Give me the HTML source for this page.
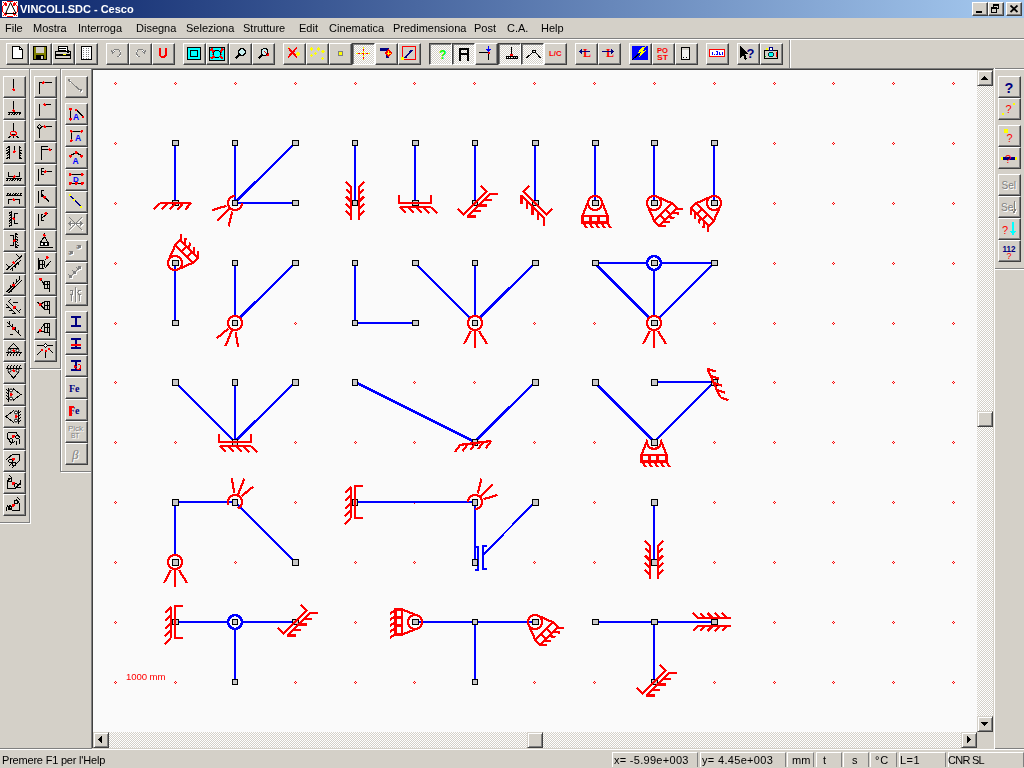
<!DOCTYPE html><html><head><meta charset="utf-8"><title>VINCOLI.SDC - Cesco</title><style>
*{margin:0;padding:0;box-sizing:border-box}
html,body{width:1024px;height:768px;overflow:hidden;background:#D4D0C8;font-family:"Liberation Sans",sans-serif;font-size:11px;color:#000}
body{position:relative}
.a{position:absolute}
.b{position:absolute;width:23px;height:22px;background:#D4D0C8;border-style:solid;border-width:1px;border-color:#fff #404040 #404040 #fff;box-shadow:inset -1px -1px #808080}
.p{border-color:#404040 #fff #fff #404040;box-shadow:inset 1px 1px #808080;background:repeating-conic-gradient(#fff 0 25%,#D4D0C8 0 50%) 0 0/2px 2px}
.b svg{position:absolute;left:2px;top:2px;width:16px;height:16px;overflow:visible}
.p svg{left:3px;top:3px}
.chk{background:repeating-conic-gradient(#fff 0 25%,#D4D0C8 0 50%) 0 0/2px 2px}
.sb{position:absolute;width:16px;height:16px;background:#D4D0C8;border-style:solid;border-width:1px;border-color:#D4D0C8 #404040 #404040 #D4D0C8;box-shadow:inset 1px 1px #fff,inset -1px -1px #808080}
.tb{position:absolute;top:2px;width:16px;height:14px;background:#D4D0C8;border-style:solid;border-width:1px;border-color:#fff #404040 #404040 #fff;box-shadow:inset -1px -1px #808080}
.m{position:absolute;top:22px;font-size:11px;line-height:13px;white-space:nowrap;will-change:transform}
.t{will-change:transform}
.st{position:absolute;top:752px;height:16px;border-style:solid;border-width:1px;border-color:#808080 #fff #fff #808080;font-size:11px;line-height:13px;white-space:nowrap;padding-left:1px}
svg{display:block}
</style></head><body><div class="a" style="left:0;top:0;width:1024px;height:18px;background:linear-gradient(to right,#0A246A,#A6CAF0)"></div><svg class="a" style="left:2px;top:1px" width="16" height="16" viewBox="0 0 16 16" shape-rendering="crispEdges"><rect x="0" y="0" width="16" height="16" fill="#fff"/><path d="M5 0h6v1h-6zM5 15h6v1h-6zM0 5h1v6h-1zM15 5h1v6h-1z" fill="#f00"/><path d="M1 1h1v1h-1zM3 1h1v1h-1zM2 2h3v2h-1v1h-1v-1h-1zM1 4h1v1h-1zM4 4h1v1h-1zM12 1h1v1h-1zM14 1h1v1h-1zM11 2h3v2h-1v1h-1v-1h-1zM11 4h1v1h-1zM14 4h1v1h-1zM1 11h1v1h-1zM4 11h1v1h-1zM2 12h3v2h-1v1h-1v-1h-1zM1 14h1v1h-1zM3 14h1v1h-1zM11 11h1v1h-1zM14 11h1v1h-1zM11 12h3v2h-1v1h-1v-1h-1zM12 14h1v1h-1zM14 14h1v1h-1z" fill="#f00"/><path d="M8.5 1.5L14 12.5H3.5Z" fill="none" stroke="#000" stroke-width="1" shape-rendering="auto"/></svg><div class="a t" style="left:20px;top:2px;color:#fff;font-weight:bold;font-size:11px;line-height:14px;white-space:nowrap">VINCOLI.SDC - Cesco</div><div class="tb" style="left:972px"><div class="a" style="left:3px;top:8px;width:6px;height:2px;background:#000"></div></div><div class="tb" style="left:988px"><div class="a" style="left:4px;top:1px;width:6px;height:5px;border:1px solid #000;border-top-width:2px"></div><div class="a" style="left:2px;top:4px;width:6px;height:6px;border:1px solid #000;border-top-width:2px;background:#D4D0C8"></div></div><svg class="a" style="left:1006px;top:2px" width="16" height="14"></svg><div class="tb" style="left:1006px"><svg class="a" style="left:3px;top:2px" width="9" height="8" viewBox="0 0 9 8"><path d="M0.5 0.5 L7.5 7 M7.5 0.5 L0.5 7" stroke="#000" stroke-width="1.8"/></svg></div><div class="m" style="left:5px">File</div><div class="m" style="left:32.5px">Mostra</div><div class="m" style="left:78px">Interroga</div><div class="m" style="left:136px">Disegna</div><div class="m" style="left:186px">Seleziona</div><div class="m" style="left:243px">Strutture</div><div class="m" style="left:299px">Edit</div><div class="m" style="left:329px">Cinematica</div><div class="m" style="left:393px">Predimensiona</div><div class="m" style="left:474px">Post</div><div class="m" style="left:507px">C.A.</div><div class="m" style="left:541px">Help</div><div class="a" style="left:0;top:38px;width:1024px;height:1px;background:#808080"></div><div class="a" style="left:0;top:39px;width:1024px;height:1px;background:#fff"></div><div class="b" style="left:6px;top:43px"><svg viewBox="0 0 16 16" shape-rendering="crispEdges"><path d="M3.5 0.5H10.5L13.5 3.5V12.5H3.5Z" stroke="#000" stroke-width="1" fill="#fff" /><path d="M10.5 0.5V3.5H13.5" stroke="#000" stroke-width="1" fill="none" /></svg></div><div class="b" style="left:29px;top:43px"><svg viewBox="0 0 16 16" shape-rendering="crispEdges"><rect x="1" y="0" width="14" height="14" fill="#000"/><rect x="2" y="1" width="12" height="12" fill="#808000"/><rect x="4" y="1" width="8" height="6" fill="#D4D0C8"/><rect x="4" y="9" width="8" height="5" fill="#000"/><rect x="9" y="10" width="2" height="3" fill="#D4D0C8"/></svg></div><div class="b" style="left:52px;top:43px"><svg viewBox="0 0 16 16" shape-rendering="crispEdges"><path d="M3.5 0.5H12.5V5.5H3.5Z" stroke="#000" stroke-width="1" fill="#fff" /><path d="M4 2.5H11M4 4H11" stroke="#000" stroke-width="1" fill="none" /><path d="M0.5 5.5H15.5V12.5H0.5Z" stroke="#000" stroke-width="1" fill="#D4D0C8" /><rect x="1" y="8" width="14" height="2" fill="#000"/><rect x="8" y="8" width="3" height="1" fill="#ff0"/><path d="M13 6.5A1 1 0 1 1 13.01 6.5" stroke="#000" stroke-width="1" fill="none" /></svg></div><div class="b" style="left:75px;top:43px"><svg viewBox="0 0 16 16" shape-rendering="crispEdges"><rect x="3" y="0" width="11" height="14" fill="#000"/><rect x="4" y="1" width="9" height="12" fill="#fff"/><rect x="5.0" y="1.5" width="1.2" height="1.2" fill="#808080"/><rect x="7.5" y="1.5" width="1.2" height="1.2" fill="#808080"/><rect x="10.0" y="1.5" width="1.2" height="1.2" fill="#808080"/><rect x="5.0" y="3.5" width="1.2" height="1.2" fill="#808080"/><rect x="7.5" y="3.5" width="1.2" height="1.2" fill="#808080"/><rect x="10.0" y="3.5" width="1.2" height="1.2" fill="#808080"/><rect x="5.0" y="5.5" width="1.2" height="1.2" fill="#808080"/><rect x="7.5" y="5.5" width="1.2" height="1.2" fill="#808080"/><rect x="10.0" y="5.5" width="1.2" height="1.2" fill="#808080"/><rect x="5.0" y="7.5" width="1.2" height="1.2" fill="#808080"/><rect x="7.5" y="7.5" width="1.2" height="1.2" fill="#808080"/><rect x="10.0" y="7.5" width="1.2" height="1.2" fill="#808080"/><rect x="5.0" y="9.5" width="1.2" height="1.2" fill="#808080"/><rect x="7.5" y="9.5" width="1.2" height="1.2" fill="#808080"/><rect x="10.0" y="9.5" width="1.2" height="1.2" fill="#808080"/><rect x="5.0" y="11.5" width="1.2" height="1.2" fill="#808080"/><rect x="7.5" y="11.5" width="1.2" height="1.2" fill="#808080"/><rect x="10.0" y="11.5" width="1.2" height="1.2" fill="#808080"/></svg></div><div class="b" style="left:106px;top:43px"><svg viewBox="0 0 16 16" shape-rendering="crispEdges"><path d="M4 6A4 4 0 1 1 9 11" stroke="#fff" stroke-width="1" fill="none" /><path d="M3.5 6A4 4 0 1 1 8.5 11" stroke="#808080" stroke-width="1" fill="none" /><path d="M2 4L3.5 7L6 5.5" stroke="#808080" stroke-width="1" fill="none" /></svg></div><div class="b" style="left:129px;top:43px"><svg viewBox="0 0 16 16" shape-rendering="crispEdges"><path d="M12 6A4 4 0 1 0 7 11" stroke="#fff" stroke-width="1" fill="none" /><path d="M12.5 6A4 4 0 1 0 7.5 11" stroke="#808080" stroke-width="1" fill="none" /><path d="M14 4L12.5 7L10 5.5" stroke="#808080" stroke-width="1" fill="none" /></svg></div><div class="b" style="left:152px;top:43px"><svg viewBox="0 0 16 16" shape-rendering="crispEdges"><path d="M5 1.5V8A3 3 0 0 0 11 8V1.5" stroke="#f00" stroke-width="2" fill="none" /></svg></div><div class="b" style="left:183px;top:43px"><svg viewBox="0 0 16 16" shape-rendering="crispEdges"><rect x="1" y="1" width="14" height="13" fill="#000"/><rect x="2" y="2" width="12" height="11" fill="#0ff"/><rect x="3.5" y="4" width="8.5" height="7" fill="#000"/><rect x="4.5" y="5" width="6.5" height="5" fill="#0ff"/></svg></div><div class="b" style="left:206px;top:43px"><svg viewBox="0 0 16 16" shape-rendering="crispEdges"><rect x="0" y="1" width="16" height="14" fill="#000"/><rect x="1" y="2" width="14" height="12" fill="#0ff"/><path d="M1 4.5H15M1 11.5H15M3.5 2V14M12.5 2V14" stroke="#f00" stroke-width="1" fill="none" stroke-dasharray="1 1"/><circle cx="8" cy="8" r="3.6" fill="#0ff" stroke="#000" stroke-width="1"/><path d="M2 3L5 6M14 3L11 6M2 13L5 10M14 13L11 10" stroke="#f00" stroke-width="1.5" fill="none" /></svg></div><div class="b" style="left:229px;top:43px"><svg viewBox="0 0 16 16" shape-rendering="crispEdges"><path d="M3.5 12.5L7.5 8.5" stroke="#000" stroke-width="2.2" fill="none" /><circle cx="10" cy="6" r="3.4" fill="#c8f0f0" stroke="#000" stroke-width="1.3"/></svg></div><div class="b" style="left:252px;top:43px"><svg viewBox="0 0 16 16" shape-rendering="crispEdges"><path d="M3.5 12.5L7.5 8.5" stroke="#000" stroke-width="2.2" fill="none" /><circle cx="9.5" cy="6" r="3.4" fill="#c8f0f0" stroke="#000" stroke-width="1.3"/><path d="M9 5L13 9" stroke="#f00" stroke-width="1.4" fill="none" /><polygon points="14,10 10.5,9.5 13.5,6.5" fill="#f00"/></svg></div><div class="b" style="left:283px;top:43px"><svg viewBox="0 0 16 16" shape-rendering="crispEdges"><path d="M2 1.5L11 11.5M11 1.5L2 11.5" stroke="#f00" stroke-width="1.8" fill="none" /><rect x="11" y="7" width="2" height="2" fill="#ff0"/><rect x="12" y="8" width="0" height="0" fill="#ff0"/><path d="M12 6.5L13.5 8L12 9.5L10.5 8Z" stroke="#ff0" stroke-width="1" fill="#ff0" /><rect x="2" y="1" width="1" height="1" fill="#ff0"/></svg></div><div class="b" style="left:306px;top:43px"><svg viewBox="0 0 16 16" shape-rendering="crispEdges"><path d="M2.5 1.8L3.7 3L2.5 4.2L1.3 3Z" stroke="#ff0" stroke-width="1" fill="#ff0" /><path d="M9.5 1.8L10.7 3L9.5 4.2L8.3 3Z" stroke="#ff0" stroke-width="1" fill="#ff0" /><path d="M14 4.3L15.2 5.5L14 6.7L12.8 5.5Z" stroke="#ff0" stroke-width="1" fill="#ff0" /><path d="M6.5 6.3L7.7 7.5L6.5 8.7L5.3 7.5Z" stroke="#ff0" stroke-width="1" fill="#ff0" /><path d="M2.5 8.3L3.7 9.5L2.5 10.7L1.3 9.5Z" stroke="#ff0" stroke-width="1" fill="#ff0" /><path d="M13.5 11.3L14.7 12.5L13.5 13.7L12.3 12.5Z" stroke="#ff0" stroke-width="1" fill="#ff0" /></svg></div><div class="b" style="left:329px;top:43px"><svg viewBox="0 0 16 16" shape-rendering="crispEdges"><rect x="6" y="5" width="5" height="5" fill="#808080"/><rect x="7" y="6" width="3" height="3" fill="#ff0"/></svg></div><div class="b p" style="left:352px;top:43px"><svg viewBox="0 0 16 16" shape-rendering="crispEdges"><path d="M0 6.5H14" stroke="#f00" stroke-width="1" fill="none" /><path d="M0 6.5H14" stroke="#ff0" stroke-width="1" fill="none" stroke-dasharray="1.5 2.5"/><path d="M7 0V13" stroke="#f00" stroke-width="1" fill="none" /><path d="M7 0V13" stroke="#ff0" stroke-width="1" fill="none" stroke-dasharray="1.5 2.5"/></svg></div><div class="b" style="left:375px;top:43px"><svg viewBox="0 0 16 16" shape-rendering="crispEdges"><rect x="1.5" y="1.5" width="9" height="3" fill="#000080"/><rect x="7.5" y="1.5" width="3" height="10" fill="#000080"/><path d="M10.5 4L13.5 7L10.5 10L7.5 7Z" stroke="#f00" stroke-width="1.5" fill="#f00" /><path d="M10.5 5V9M8.5 7H12.5" stroke="#ff0" stroke-width="1" fill="none" /></svg></div><div class="b" style="left:398px;top:43px"><svg viewBox="0 0 16 16" shape-rendering="crispEdges"><path d="M1.5 0.5H14.5V13.5H1.5Z" stroke="#f00" stroke-width="1" fill="none" /><path d="M4 12L11 4" stroke="#000080" stroke-width="1.8" fill="none" /><rect x="0" y="11" width="3" height="3" fill="#ff0"/></svg></div><div class="b p" style="left:429px;top:43px"><svg viewBox="0 0 16 16" shape-rendering="crispEdges"><text x="6" y="12" font-family="Liberation Sans" font-weight="bold" font-size="12" fill="#0f0">?</text></svg></div><div class="b p" style="left:452px;top:43px"><svg viewBox="0 0 16 16" shape-rendering="crispEdges"><path d="M3.5 14V1.5H12.5V14M3.5 6.5H11" stroke="#000" stroke-width="1" fill="none" /><path d="M4.5 14V2.5H11.5V14M4.5 7.5H11" stroke="#000" stroke-width="1" fill="none" /></svg></div><div class="b" style="left:475px;top:43px"><svg viewBox="0 0 16 16" shape-rendering="crispEdges"><path d="M1 6.5H10M10.5 6.5V14" stroke="#000" stroke-width="1" fill="none" /><path d="M10.5 0V5M8.5 3L10.5 5.5L12.5 3" stroke="#00f" stroke-width="1" fill="none" /><rect x="9.5" y="5.5" width="2" height="2" fill="#f00"/></svg></div><div class="b p" style="left:498px;top:43px"><svg viewBox="0 0 16 16" shape-rendering="crispEdges"><path d="M9.5 0V7" stroke="#000" stroke-width="1" fill="none" /><rect x="8" y="6.5" width="3" height="2.5" fill="#f00"/><path d="M4.5 9.5H15.5V11.5H4.5Z" stroke="#000" stroke-width="1" fill="none" /><path d="M5.5 11.5L7 9.5M8 11.5L9.5 9.5M10.5 11.5L12 9.5M13 11.5L14.5 9.5" stroke="#000" stroke-width="1" fill="none" /></svg></div><div class="b p" style="left:521px;top:43px"><svg viewBox="0 0 16 16" shape-rendering="crispEdges"><path d="M1.5 11L8 5M10 5L15.5 11" stroke="#000" stroke-width="1" fill="none" /><circle cx="9" cy="4.3" r="1.4" fill="none" stroke="#000" stroke-width="1"/></svg></div><div class="b" style="left:544px;top:43px"><svg viewBox="0 0 16 16" shape-rendering="crispEdges"><text x="2" y="10" font-family="Liberation Sans" font-weight="bold" font-size="7.5" fill="#f00" textLength="12.5" lengthAdjust="spacingAndGlyphs">L/C</text></svg></div><div class="b" style="left:575px;top:43px"><svg viewBox="0 0 16 16" shape-rendering="crispEdges"><text x="5" y="11" font-family="Liberation Serif" font-weight="bold" font-size="12" fill="#f00">L</text><path d="M2 5.5H12" stroke="#000080" stroke-width="1" fill="none" /><path d="M4 3.5L1.5 5.5L4 7.5" stroke="#000080" stroke-width="1" fill="none" /></svg></div><div class="b" style="left:598px;top:43px"><svg viewBox="0 0 16 16" shape-rendering="crispEdges"><text x="5" y="11" font-family="Liberation Serif" font-weight="bold" font-size="12" fill="#f00">L</text><path d="M1 5.5H12" stroke="#000080" stroke-width="1" fill="none" /><path d="M10 3.5L12.5 5.5L10 7.5" stroke="#000080" stroke-width="1" fill="none" /></svg></div><div class="b" style="left:629px;top:43px"><svg viewBox="0 0 16 16" shape-rendering="crispEdges"><rect x="0" y="0" width="16" height="14" fill="#00f"/><path d="M0 14L8 7" stroke="#000" stroke-width="1" fill="none" /><polygon points="9,2 14,0 11,5 14,4 7,11 9,6 6,7" fill="#ff0"/></svg></div><div class="b" style="left:652px;top:43px"><svg viewBox="0 0 16 16" shape-rendering="crispEdges"><text x="2" y="6.5" font-family="Liberation Sans" font-weight="bold" font-size="7" fill="#f00" textLength="11" lengthAdjust="spacingAndGlyphs">PO</text><text x="2" y="13.5" font-family="Liberation Sans" font-weight="bold" font-size="7" fill="#f00" textLength="11" lengthAdjust="spacingAndGlyphs">ST</text></svg></div><div class="b" style="left:675px;top:43px"><svg viewBox="0 0 16 16" shape-rendering="crispEdges"><rect x="3" y="1" width="9" height="13" fill="#000"/><rect x="4" y="2" width="7" height="11" fill="#f0f0f0"/><rect x="4" y="2" width="7" height="2" fill="#D4D0C8"/><rect x="5" y="11" width="1" height="1" fill="#000"/><rect x="8" y="11" width="1" height="1" fill="#000"/></svg></div><div class="b" style="left:706px;top:43px"><svg viewBox="0 0 16 16" shape-rendering="crispEdges"><rect x="0" y="3" width="16" height="8" fill="#f00"/><rect x="1" y="4" width="14" height="6" fill="#fff"/><path d="M3 5.5V8.5M5 7.5V8.5M6.5 5.5H8.5V8.5H6.5M10 5.5V8.5H12M13 6V8.5" stroke="#00f" stroke-width="1" fill="none" /></svg></div><div class="b" style="left:737px;top:43px"><svg viewBox="0 0 16 16" shape-rendering="crispEdges"><polygon points="0,0 0,12 3,9 5,14 7,13 5,8 9,8" fill="#000"/><text x="6.5" y="11.5" font-family="Liberation Sans" font-weight="bold" font-size="13" fill="#000080">?</text></svg></div><div class="b" style="left:760px;top:43px"><svg viewBox="0 0 16 16" shape-rendering="crispEdges"><rect x="1" y="4" width="14" height="9" fill="#000"/><rect x="2" y="5" width="12" height="7" fill="#D4D0C8"/><rect x="3" y="2" width="2" height="2" fill="#ff0"/><circle cx="8" cy="3" r="1.6" fill="#fff" stroke="#000080"/><circle cx="8" cy="8.5" r="2.5" fill="#0ff" stroke="#000" stroke-width=".8"/><rect x="13" y="6" width="1" height="5" fill="#f00"/><rect x="2" y="10" width="1" height="1" fill="#0c0"/></svg></div><div class="a" style="left:789px;top:40px;width:1px;height:28px;background:#808080"></div><div class="a" style="left:790px;top:40px;width:1px;height:28px;background:#fff"></div><div class="a" style="left:0;top:68px;width:1024px;height:1px;background:#808080"></div><div class="a" style="left:0;top:69px;width:92px;height:1px;background:#fff"></div><div class="a" style="left:29px;top:68px;width:1px;height:455px;background:#808080"></div><div class="a" style="left:30px;top:69px;width:1px;height:454px;background:#fff"></div><div class="a" style="left:60px;top:68px;width:1px;height:404px;background:#808080"></div><div class="a" style="left:61px;top:69px;width:1px;height:404px;background:#fff"></div><div class="a" style="left:0px;top:522px;width:30px;height:1px;background:#808080"></div><div class="a" style="left:0px;top:523px;width:31px;height:1px;background:#fff"></div><div class="a" style="left:29px;top:368px;width:32px;height:1px;background:#808080"></div><div class="a" style="left:30px;top:369px;width:31px;height:1px;background:#fff"></div><div class="a" style="left:60px;top:471px;width:31px;height:1px;background:#808080"></div><div class="a" style="left:61px;top:472px;width:30px;height:1px;background:#fff"></div><div class="a" style="left:0px;top:748px;width:92px;height:1px;background:#808080"></div><div class="b" style="left:3px;top:76px"><svg viewBox="0 0 16 16" shape-rendering="crispEdges"><path d="M7.5 0V10" stroke="#000" stroke-width="1" fill="none" /><path d="M6.0 10.5H9.0M7.5 9.0V12.0" stroke="#f00" stroke-width="1.2"/><rect x="6.5" y="9.5" width="2" height="2" fill="#f00"/></svg></div><div class="b" style="left:3px;top:98px"><svg viewBox="0 0 16 16" shape-rendering="crispEdges"><path d="M7.5 0V9" stroke="#000" stroke-width="1" fill="none" /><path d="M2 11.5H14M4.5 11.5L2.5 14.0M7.1 11.5L5.1 14.0M9.7 11.5L7.699999999999999 14.0M12.299999999999999 11.5L10.299999999999999 14.0M14.899999999999999 11.5L12.899999999999999 14.0" stroke="#000" stroke-width="1" fill="none" /><path d="M6.0 9.5H9.0M7.5 8.0V11.0" stroke="#f00" stroke-width="1.2"/><rect x="6.5" y="8.5" width="2" height="2" fill="#f00"/></svg></div><div class="b" style="left:3px;top:120px"><svg viewBox="0 0 16 16" shape-rendering="crispEdges"><path d="M7.5 0V8M7.5 11L2 15M7.5 11L13 15M7.5 12V15" stroke="#000" stroke-width="1" fill="none" /><ellipse cx="7.5" cy="10.5" rx="3.2" ry="2" fill="none" stroke="#f00" stroke-width="1.2"/></svg></div><div class="b" style="left:3px;top:142px"><svg viewBox="0 0 16 16" shape-rendering="crispEdges"><path d="M3 1V14M3 1.5L0.5 3.5M3 4.1L0.5 6.1M3 6.699999999999999L0.5 8.7M3 9.299999999999999L0.5 11.299999999999999M3 11.899999999999999L0.5 13.899999999999999" stroke="#000" stroke-width="1" fill="none" /><path d="M13 1V14M13 1.5L15.5 3.5M13 4.1L15.5 6.1M13 6.699999999999999L15.5 8.7M13 9.299999999999999L15.5 11.299999999999999M13 11.899999999999999L15.5 13.899999999999999" stroke="#000" stroke-width="1" fill="none" /><path d="M8 1V6" stroke="#000" stroke-width="1" fill="none" /><path d="M6.9 6.5H9.9M8.4 5.0V8.0" stroke="#f00" stroke-width="1.2"/><rect x="7.4" y="5.5" width="2" height="2" fill="#f00"/></svg></div><div class="b" style="left:3px;top:164px"><svg viewBox="0 0 16 16" shape-rendering="crispEdges"><path d="M2.5 5V9.5H13.5V5" stroke="#000" stroke-width="1" fill="none" /><path d="M0 11.5H15.5M2.5 11.5L0.5 14.0M5.1 11.5L3.1 14.0M7.7 11.5L5.7 14.0M10.3 11.5L8.3 14.0M12.9 11.5L10.9 14.0M15.5 11.5L13.5 14.0" stroke="#000" stroke-width="1" fill="none" /><path d="M6.800000000000001 9.5H9.8M8.3 8.0V11.0" stroke="#f00" stroke-width="1.2"/><rect x="7.300000000000001" y="8.5" width="2" height="2" fill="#f00"/></svg></div><div class="b" style="left:3px;top:186px"><svg viewBox="0 0 16 16" shape-rendering="crispEdges"><path d="M0 6.5H15.5M2.5 4.0L0.5 6.5M5.1 4.0L3.1 6.5M7.7 4.0L5.7 6.5M10.3 4.0L8.3 6.5M12.9 4.0L10.9 6.5M15.5 4.0L13.5 6.5" stroke="#000" stroke-width="1" fill="none" /><path d="M2.5 14.5V10.5H13.5V14.5" stroke="#000" stroke-width="1" fill="none" /><path d="M6.1 10.5H9.1M7.6 9.0V12.0" stroke="#f00" stroke-width="1.2"/><rect x="6.6" y="9.5" width="2" height="2" fill="#f00"/></svg></div><div class="b" style="left:3px;top:208px"><svg viewBox="0 0 16 16" shape-rendering="crispEdges"><path d="M5.5 0V15M5.5 0.5L3.0 2.5M5.5 3.1L3.0 5.1M5.5 5.7L3.0 7.7M5.5 8.3L3.0 10.3M5.5 10.9L3.0 12.9M5.5 13.5L3.0 15.5" stroke="#000" stroke-width="1" fill="none" /><path d="M11.5 2H8.5V12.5H11.5" stroke="#000" stroke-width="1" fill="none" /><path d="M6.0 7.8H9.0M7.5 6.3V9.3" stroke="#f00" stroke-width="1.2"/><rect x="6.5" y="6.8" width="2" height="2" fill="#f00"/></svg></div><div class="b" style="left:3px;top:230px"><svg viewBox="0 0 16 16" shape-rendering="crispEdges"><path d="M4.3 2.2H7V12.8H4.3" stroke="#000" stroke-width="1" fill="none" /><path d="M9.8 0V15M9.8 0.5L12.3 2.5M9.8 3.1L12.3 5.1M9.8 5.7L12.3 7.7M9.8 8.3L12.3 10.3M9.8 10.9L12.3 12.9M9.8 13.5L12.3 15.5" stroke="#000" stroke-width="1" fill="none" /><path d="M6.800000000000001 7.5H9.8M8.3 6.0V9.0" stroke="#f00" stroke-width="1.2"/><rect x="7.300000000000001" y="6.5" width="2" height="2" fill="#f00"/></svg></div><div class="b" style="left:3px;top:252px"><svg viewBox="0 0 16 16" shape-rendering="crispEdges"><path d="M0.5 15L16 0.5M3 12L0 9M13 2L10 -1M4 15L15.5 4.5M6 13L6 16M9 10L9 13M12 7L12 10" stroke="#000" stroke-width="1" fill="none" /><path d="M6.0 7.5H9.0M7.5 6.0V9.0" stroke="#f00" stroke-width="1.2"/><rect x="6.5" y="6.5" width="2" height="2" fill="#f00"/></svg></div><div class="b" style="left:3px;top:274px"><svg viewBox="0 0 16 16" shape-rendering="crispEdges"><path d="M0.5 15L14 2M2.5 16L16 3M4 11L4 8M7 8L7 5M10 5L10 2M13 2L13 -1M6 14L3 14" stroke="#000" stroke-width="1" fill="none" /><path d="M6.0 8H9.0M7.5 6.5V9.5" stroke="#f00" stroke-width="1.2"/><rect x="6.5" y="7" width="2" height="2" fill="#f00"/></svg></div><div class="b" style="left:3px;top:296px"><svg viewBox="0 0 16 16" shape-rendering="crispEdges"><path d="M2 2L14 14M5 0L2 3M12 13L15 10M0 5L10 15M0 8L3 8M3 11L6 11M6 14L9 14M7 3L12 3" stroke="#000" stroke-width="1" fill="none" /><path d="M6.5 8H9.5M8 6.5V9.5" stroke="#f00" stroke-width="1.2"/><rect x="7" y="7" width="2" height="2" fill="#f00"/></svg></div><div class="b" style="left:3px;top:318px"><svg viewBox="0 0 16 16" shape-rendering="crispEdges"><path d="M1 1L15.5 15.5M3.5 0L3.5 3M6.5 3L6.5 6M9.5 6L9.5 9M12.5 9L12.5 12M1 5L4 5M7 13L4 13" stroke="#000" stroke-width="1" fill="none" /><path d="M5.5 7H8.5M7 5.5V8.5" stroke="#f00" stroke-width="1.2"/><rect x="6" y="6" width="2" height="2" fill="#f00"/></svg></div><div class="b" style="left:3px;top:340px"><svg viewBox="0 0 16 16" shape-rendering="crispEdges"><path d="M7.5 0.5L2.5 5.5H12.5ZM0 9.5H15.5M1 12.5L3 10M4 12.5L6 10M7 12.5L9 10M10 12.5L12 10M13 12.5L15 10" stroke="#000" stroke-width="1" fill="none" /><circle cx="3.5" cy="7.5" r="1.5" fill="#fff" stroke="#000" stroke-width="1" shape-rendering="auto"/><circle cx="11.5" cy="7.5" r="1.5" fill="#fff" stroke="#000" stroke-width="1" shape-rendering="auto"/><path d="M6.0 7.5H9.0M7.5 6.0V9.0" stroke="#f00" stroke-width="1.2"/><rect x="6.5" y="6.5" width="2" height="2" fill="#f00"/></svg></div><div class="b" style="left:3px;top:362px"><svg viewBox="0 0 16 16" shape-rendering="crispEdges"><path d="M1 2.5L3 0M4 2.5L6 0M7 2.5L9 0M10 2.5L12 0M13 2.5L15 0M0 3.5H15.5M2.5 7.5L7.5 13L12.5 7.5" stroke="#000" stroke-width="1" fill="none" /><circle cx="3.5" cy="5.5" r="1.5" fill="#fff" stroke="#000" stroke-width="1" shape-rendering="auto"/><circle cx="11.5" cy="5.5" r="1.5" fill="#fff" stroke="#000" stroke-width="1" shape-rendering="auto"/><path d="M6.0 5.5H9.0M7.5 4.0V7.0" stroke="#f00" stroke-width="1.2"/><rect x="6.5" y="4.5" width="2" height="2" fill="#f00"/></svg></div><div class="b" style="left:3px;top:384px"><svg viewBox="0 0 16 16" shape-rendering="crispEdges"><path d="M2.5 0.5V15M0 2L2 4M0 5L2 7M0 8L2 10M0 11L2 13M7 1.5L15 7.5L7 13.5" stroke="#000" stroke-width="1" fill="none" /><circle cx="5" cy="3.5" r="1.5" fill="#fff" stroke="#000" stroke-width="1" shape-rendering="auto"/><circle cx="5" cy="11.5" r="1.5" fill="#fff" stroke="#000" stroke-width="1" shape-rendering="auto"/><path d="M3.5 7.5H6.5M5 6.0V9.0" stroke="#f00" stroke-width="1.2"/><rect x="4" y="6.5" width="2" height="2" fill="#f00"/></svg></div><div class="b" style="left:3px;top:406px"><svg viewBox="0 0 16 16" shape-rendering="crispEdges"><path d="M12.5 0.5V15M15 2L13 4M15 5L13 7M15 8L13 10M15 11L13 13M8 1.5L0 7.5L8 13.5" stroke="#000" stroke-width="1" fill="none" /><circle cx="10" cy="3.5" r="1.5" fill="#fff" stroke="#000" stroke-width="1" shape-rendering="auto"/><circle cx="10" cy="11.5" r="1.5" fill="#fff" stroke="#000" stroke-width="1" shape-rendering="auto"/><path d="M8.5 7.5H11.5M10 6.0V9.0" stroke="#f00" stroke-width="1.2"/><rect x="9" y="6.5" width="2" height="2" fill="#f00"/></svg></div><div class="b" style="left:3px;top:428px"><svg viewBox="0 0 16 16" shape-rendering="crispEdges"><path d="M1.5 1.5H10M1.5 1.5V7M1.5 7L5.5 12M10 1.5L13 6M4 14L7 11M7 12L9 10" stroke="#000" stroke-width="1" fill="none" /><circle cx="11.5" cy="6" r="1.8" fill="none" stroke="#000"/><circle cx="5" cy="9.5" r="1.8" fill="none" stroke="#000"/><path d="M13 8V13M10 10V14" stroke="#000" stroke-width="1" fill="none" /><path d="M5.5 5H8.5M7 3.5V6.5" stroke="#f00" stroke-width="1.2"/><rect x="6" y="4" width="2" height="2" fill="#f00"/></svg></div><div class="b" style="left:3px;top:450px"><svg viewBox="0 0 16 16" shape-rendering="crispEdges"><path d="M7 1H13V8M7 1L1 6M13 8L8 13M0 7L3 4M3 13L6 10M6 15L9 12" stroke="#000" stroke-width="1" fill="none" /><circle cx="4.5" cy="8" r="1.8" fill="none" stroke="#000"/><circle cx="8" cy="11" r="1.8" fill="none" stroke="#000"/><path d="M6.0 6H9.0M7.5 4.5V7.5" stroke="#f00" stroke-width="1.2"/><rect x="6.5" y="5" width="2" height="2" fill="#f00"/></svg></div><div class="b" style="left:3px;top:472px"><svg viewBox="0 0 16 16" shape-rendering="crispEdges"><path d="M1.5 6V13.5H9M1.5 6L4.5 3M9 13.5L14 8.5M3 0L6 3M14 5V10M11 9V13M15 12H11" stroke="#000" stroke-width="1" fill="none" /><circle cx="4" cy="5" r="1.8" fill="none" stroke="#000"/><circle cx="10" cy="10.5" r="1.8" fill="none" stroke="#000"/><path d="M5.5 8H8.5M7 6.5V9.5" stroke="#f00" stroke-width="1.2"/><rect x="6" y="7" width="2" height="2" fill="#f00"/></svg></div><div class="b" style="left:3px;top:494px"><svg viewBox="0 0 16 16" shape-rendering="crispEdges"><path d="M13 5.5V13H5.5M13 5.5L10 2.5M5.5 13L1 8.5M11 0L14 3M0 10V14M3 9H7M2 12H6" stroke="#000" stroke-width="1" fill="none" /><circle cx="10" cy="5" r="1.8" fill="none" stroke="#000"/><circle cx="4" cy="10.5" r="1.8" fill="none" stroke="#000"/><path d="M5.5 8H8.5M7 6.5V9.5" stroke="#f00" stroke-width="1.2"/><rect x="6" y="7" width="2" height="2" fill="#f00"/></svg></div><div class="b" style="left:34px;top:76px"><svg viewBox="0 0 16 16" shape-rendering="crispEdges"><path d="M2.5 15V3.5H14.5" stroke="#000" stroke-width="1" fill="none" /><path d="M4.9 3.6H7.9M6.4 2.1V5.1" stroke="#f00" stroke-width="1.2"/><rect x="5.4" y="2.6" width="2" height="2" fill="#f00"/></svg></div><div class="b" style="left:34px;top:98px"><svg viewBox="0 0 16 16" shape-rendering="crispEdges"><path d="M2.5 3V14.5M7.5 3.5H14" stroke="#000" stroke-width="1" fill="none" /><path d="M6.0 3.5H9.0M7.5 2.0V5.0" stroke="#f00" stroke-width="1.2"/><rect x="6.5" y="2.5" width="2" height="2" fill="#f00"/></svg></div><div class="b" style="left:34px;top:120px"><svg viewBox="0 0 16 16" shape-rendering="crispEdges"><path d="M2.5 5.7V15M4.3 3.7H14.5" stroke="#000" stroke-width="1" fill="none" /><circle cx="2.5" cy="3.7" r="1.8" fill="none" stroke="#000" stroke-width="1.1"/><path d="M6.0 3.7H9.0M7.5 2.2V5.2" stroke="#f00" stroke-width="1.2"/><rect x="6.5" y="2.7" width="2" height="2" fill="#f00"/></svg></div><div class="b" style="left:34px;top:142px"><svg viewBox="0 0 16 16" shape-rendering="crispEdges"><path d="M4 14.5V1.2H10.5M4 4.6H14.5" stroke="#000" stroke-width="1" fill="none" /><path d="M11.3 4.6H14.3M12.8 3.0999999999999996V6.1" stroke="#f00" stroke-width="1.2"/><rect x="11.8" y="3.5999999999999996" width="2" height="2" fill="#f00"/></svg></div><div class="b" style="left:34px;top:164px"><svg viewBox="0 0 16 16" shape-rendering="crispEdges"><path d="M1.7 2V14.3M4 1V7M4 1.2H7M4 7H7M4 4.5H14.5" stroke="#000" stroke-width="1" fill="none" /><path d="M6.6 4.5H9.6M8.1 3.0V6.0" stroke="#f00" stroke-width="1.2"/><rect x="7.1" y="3.5" width="2" height="2" fill="#f00"/></svg></div><div class="b" style="left:34px;top:186px"><svg viewBox="0 0 16 16" shape-rendering="crispEdges"><path d="M1.7 2V14.3M4 1V7M4 1.2H7M4 7H7M4 4.5L12 12.5" stroke="#000" stroke-width="1" fill="none" /><path d="M6.0 8H9.0M7.5 6.5V9.5" stroke="#f00" stroke-width="1.2"/><rect x="6.5" y="7" width="2" height="2" fill="#f00"/></svg></div><div class="b" style="left:34px;top:208px"><svg viewBox="0 0 16 16" shape-rendering="crispEdges"><path d="M1.7 2.5V14.5M4 3V9M4 3H6M4 9H7M4 8L11 2" stroke="#000" stroke-width="1" fill="none" /><path d="M7.4 2.5H10.4M8.9 1.0V4.0" stroke="#f00" stroke-width="1.2"/><rect x="7.9" y="1.5" width="2" height="2" fill="#f00"/></svg></div><div class="b" style="left:34px;top:230px"><svg viewBox="0 0 16 16" shape-rendering="crispEdges"><path d="M7.3 0V2M7.3 3.5L3.4 9.3M7.3 3.5L11 9.3M1 14.5H15.7" stroke="#000" stroke-width="1" fill="none" /><rect x="3" y="9" width="9" height="4" fill="#000"/><rect x="4" y="10" width="2" height="2" fill="#fff"/><rect x="8" y="10" width="2" height="2" fill="#fff"/><path d="M5.8 2.2H8.8M7.3 0.7000000000000002V3.7" stroke="#f00" stroke-width="1.2"/><rect x="6.3" y="1.2000000000000002" width="2" height="2" fill="#f00"/></svg></div><div class="b" style="left:34px;top:252px"><svg viewBox="0 0 16 16" shape-rendering="crispEdges"><path d="M1.5 3V14.5" stroke="#000" stroke-width="1" fill="none" /><path d="M2.5 5V13M5.5 5V13M7.5 6V12M2 5.5H7M2 9.5H8M2 13.5H7" stroke="#000" stroke-width="1" fill="none" /><path d="M8 5L10 2.5M8 13L13.5 6.5" stroke="#000" stroke-width="1" fill="none" /><path d="M8.5 2.5H11.5M10 1.0V4.0" stroke="#f00" stroke-width="1.2"/><rect x="9" y="1.5" width="2" height="2" fill="#f00"/></svg></div><div class="b" style="left:34px;top:274px"><svg viewBox="0 0 16 16" shape-rendering="crispEdges"><path d="M12.5 4V14.5M3.5 2L6.5 6M6.5 6L8 11" stroke="#000" stroke-width="1" fill="none" /><path d="M7.5 4V11M10.5 4V11M12.5 5V10M7 4.5H12M7 7.5H13M7 11.5H12" stroke="#000" stroke-width="1" fill="none" /><path d="M1.9 2H4.9M3.4 0.5V3.5" stroke="#f00" stroke-width="1.2"/><rect x="2.4" y="1" width="2" height="2" fill="#f00"/></svg></div><div class="b" style="left:34px;top:296px"><svg viewBox="0 0 16 16" shape-rendering="crispEdges"><path d="M12.5 2V14.5M0.5 3L3 5.7M3 5.7L7.5 2.5M3 5.7L7.5 10" stroke="#000" stroke-width="1" fill="none" /><path d="M7.5 2V10M10.5 2V10M12.5 3V9M7 2.5H12M7 6.5H13M7 10.5H12" stroke="#000" stroke-width="1" fill="none" /><path d="M1.5 5.7H4.5M3 4.2V7.2" stroke="#f00" stroke-width="1.2"/><rect x="2" y="4.7" width="2" height="2" fill="#f00"/></svg></div><div class="b" style="left:34px;top:318px"><svg viewBox="0 0 16 16" shape-rendering="crispEdges"><path d="M12.5 2V14.5M0.5 12L3 9.5M3 9.5L7.5 2.5M3 9.5L7.5 11" stroke="#000" stroke-width="1" fill="none" /><path d="M7.5 2V11M10.5 2V11M12.5 3V10M7 2.5H12M7 6.5H13M7 11.5H12" stroke="#000" stroke-width="1" fill="none" /><path d="M1.5 9.5H4.5M3 8.0V11.0" stroke="#f00" stroke-width="1.2"/><rect x="2" y="8.5" width="2" height="2" fill="#f00"/></svg></div><div class="b" style="left:34px;top:340px"><svg viewBox="0 0 16 16" shape-rendering="crispEdges"><path d="M0 2.5H16M6 6L0 12M12 6L16 10M8.5 9V15" stroke="#000" stroke-width="1" fill="none" /><circle cx="8.5" cy="2.5" r="1.8" fill="#fff" stroke="#000" stroke-width="1"/><rect x="3.7" y="5.7" width="2" height="2" fill="#f00"/><rect x="8.0" y="7.0" width="2" height="2" fill="#f00"/><rect x="11.0" y="4.5" width="2" height="2" fill="#f00"/></svg></div><div class="b" style="left:65px;top:76px"><svg viewBox="0 0 16 16" shape-rendering="crispEdges"><g transform="translate(1 1)" opacity="1"><path d="M0.6 1.1L13.2 12.3M0 0L2 2M1.5 0L0 2M12 10L14 12M14 10.5L12 12.5" stroke="#fff" stroke-width="1" fill="none" /></g><path d="M0.6 1.1L13.2 12.3M0 0L2 2M1.5 0L0 2M12 10L14 12M14 10.5L12 12.5" stroke="#808080" stroke-width="1" fill="none" /></svg></div><div class="b" style="left:65px;top:103px"><svg viewBox="0 0 16 16" shape-rendering="crispEdges"><path d="M2.4 3V13.5" stroke="#000" stroke-width="1" fill="none" /><path d="M0.8999999999999999 3H3.9M2.4 1.5V4.5" stroke="#f00" stroke-width="1.2"/><rect x="1.4" y="2" width="2" height="2" fill="#f00"/><path d="M0.8999999999999999 13H3.9M2.4 11.5V14.5" stroke="#f00" stroke-width="1.2"/><rect x="1.4" y="12" width="2" height="2" fill="#f00"/><path d="M7.9 3.6L15.1 10.6" stroke="#000" stroke-width="1" fill="none" /><rect x="6.9" y="2.6" width="2" height="2" fill="#f00"/><rect x="14.0" y="9.6" width="2" height="2" fill="#f00"/><text x="5" y="13.5" font-family="Liberation Sans" font-size="8.5" font-weight="bold" fill="#00f" >A</text></svg></div><div class="b" style="left:65px;top:125px"><svg viewBox="0 0 16 16" shape-rendering="crispEdges"><path d="M3.4 12.5V3.2H13.7" stroke="#000" stroke-width="1" fill="none" /><path d="M1.9 3.2H4.9M3.4 1.7000000000000002V4.7" stroke="#f00" stroke-width="1.2"/><rect x="2.4" y="2.2" width="2" height="2" fill="#f00"/><path d="M12.0 3.2H15.0M13.5 1.7000000000000002V4.7" stroke="#f00" stroke-width="1.2"/><rect x="12.5" y="2.2" width="2" height="2" fill="#f00"/><path d="M1.9 12.5H4.9M3.4 11.0V14.0" stroke="#f00" stroke-width="1.2"/><rect x="2.4" y="11.5" width="2" height="2" fill="#f00"/><text x="7" y="12.8" font-family="Liberation Sans" font-size="8.5" font-weight="bold" fill="#00f" >A</text></svg></div><div class="b" style="left:65px;top:147px"><svg viewBox="0 0 16 16" shape-rendering="crispEdges"><path d="M2.5 6A6 4 0 0 1 13.5 6" stroke="#000" stroke-width="1" fill="none" /><path d="M1.0 6H4.0M2.5 4.5V7.5" stroke="#f00" stroke-width="1.2"/><rect x="1.5" y="5" width="2" height="2" fill="#f00"/><path d="M6.5 2.5H9.5M8 1.0V4.0" stroke="#f00" stroke-width="1.2"/><rect x="7" y="1.5" width="2" height="2" fill="#f00"/><path d="M12.0 6H15.0M13.5 4.5V7.5" stroke="#f00" stroke-width="1.2"/><rect x="12.5" y="5" width="2" height="2" fill="#f00"/><text x="4.5" y="14" font-family="Liberation Sans" font-size="8.5" font-weight="bold" fill="#00f" >A</text></svg></div><div class="b" style="left:65px;top:169px"><svg viewBox="0 0 16 16" shape-rendering="crispEdges"><path d="M2 2.5H14M2 11H14" stroke="#000" stroke-width="1" fill="none" /><path d="M0.5 2.5H3.5M2 1.0V4.0" stroke="#f00" stroke-width="1.2"/><rect x="1" y="1.5" width="2" height="2" fill="#f00"/><path d="M12.5 2.5H15.5M14 1.0V4.0" stroke="#f00" stroke-width="1.2"/><rect x="13" y="1.5" width="2" height="2" fill="#f00"/><path d="M0.5 11H3.5M2 9.5V12.5" stroke="#f00" stroke-width="1.2"/><rect x="1" y="10" width="2" height="2" fill="#f00"/><path d="M6.5 11H9.5M8 9.5V12.5" stroke="#f00" stroke-width="1.2"/><rect x="7" y="10" width="2" height="2" fill="#f00"/><path d="M12.5 11H15.5M14 9.5V12.5" stroke="#f00" stroke-width="1.2"/><rect x="13" y="10" width="2" height="2" fill="#f00"/><text x="5" y="10" font-family="Liberation Sans" font-size="8" font-weight="bold" fill="#00f" >D</text></svg></div><div class="b" style="left:65px;top:191px"><svg viewBox="0 0 16 16" shape-rendering="crispEdges"><path d="M1.5 1L13.5 13" stroke="#000080" stroke-width="1" fill="none" /><rect x="0.5" y="0.0" width="2" height="2" fill="#ff0"/><rect x="4.5" y="4.5" width="2" height="2" fill="#ff0"/><rect x="12.0" y="11.5" width="2" height="2" fill="#ff0"/></svg></div><div class="b" style="left:65px;top:213px"><svg viewBox="0 0 16 16" shape-rendering="crispEdges"><g transform="translate(1 1)" opacity="1"><path d="M1 1L14 14M14 1L1 14M0 7.5H15M12 5.5L14.5 7.5L12 9.5M3 5.5L0.5 7.5L3 9.5" stroke="#fff" stroke-width="1" fill="none" /></g><path d="M1 1L14 14M14 1L1 14M0 7.5H15M12 5.5L14.5 7.5L12 9.5M3 5.5L0.5 7.5L3 9.5" stroke="#808080" stroke-width="1" fill="none" /></svg></div><div class="b" style="left:65px;top:240px"><svg viewBox="0 0 16 16" shape-rendering="crispEdges"><g transform="translate(1 1)" opacity="1"><text x="0" y="12" font-family="Liberation Sans" font-size="7" font-weight="bold" fill="#fff" >ə</text><text x="8" y="6" font-family="Liberation Sans" font-size="7" font-weight="bold" fill="#fff" >ə</text><rect x="2" y="8" width="3" height="3" fill="#fff"/><rect x="10" y="2" width="3" height="3" fill="#fff"/></g><text x="0" y="12" font-family="Liberation Sans" font-size="7" font-weight="bold" fill="#808080" >ə</text><text x="8" y="6" font-family="Liberation Sans" font-size="7" font-weight="bold" fill="#808080" >ə</text><rect x="2" y="8" width="3" height="3" fill="#808080"/><rect x="10" y="2" width="3" height="3" fill="#808080"/></svg></div><div class="b" style="left:65px;top:262px"><svg viewBox="0 0 16 16" shape-rendering="crispEdges"><g transform="translate(1 1)" opacity="1"><path d="M1 13L13 1M0 9L3 12M4 5L7 8M8 2L11 5" stroke="#fff" stroke-width="1" fill="none" /><rect x="10" y="1" width="3" height="3" fill="#fff"/><rect x="5" y="6" width="3" height="3" fill="#fff"/><rect x="1" y="10" width="3" height="3" fill="#fff"/></g><path d="M1 13L13 1M0 9L3 12M4 5L7 8M8 2L11 5" stroke="#808080" stroke-width="1" fill="none" /><rect x="10" y="1" width="3" height="3" fill="#808080"/><rect x="5" y="6" width="3" height="3" fill="#808080"/><rect x="1" y="10" width="3" height="3" fill="#808080"/></svg></div><div class="b" style="left:65px;top:284px"><svg viewBox="0 0 16 16" shape-rendering="crispEdges"><g transform="translate(1 1)" opacity="1"><path d="M7.5 0V15" stroke="#fff" stroke-width="1" fill="none" /><path d="M2 3C6 3 6 8 2 8M3 8L4 14M13 3C9 3 9 8 13 8M12 8L11 14" stroke="#fff" stroke-width="1" fill="none" /></g><path d="M7.5 0V15" stroke="#808080" stroke-width="1" fill="none" /><path d="M2 3C6 3 6 8 2 8M3 8L4 14M13 3C9 3 9 8 13 8M12 8L11 14" stroke="#808080" stroke-width="1" fill="none" /></svg></div><div class="b" style="left:65px;top:311px"><svg viewBox="0 0 16 16" shape-rendering="crispEdges"><rect x="3" y="2" width="10" height="2" fill="#000080"/><rect x="3" y="11" width="10" height="2" fill="#000080"/><rect x="7" y="3" width="2" height="9" fill="#000080"/></svg></div><div class="b" style="left:65px;top:333px"><svg viewBox="0 0 16 16" shape-rendering="crispEdges"><rect x="3" y="2" width="10" height="2" fill="#000080"/><rect x="7" y="3" width="2" height="9" fill="#000080"/><rect x="3" y="8" width="10" height="2" fill="#f00"/><rect x="3" y="11" width="10" height="2" fill="#000080"/></svg></div><div class="b" style="left:65px;top:355px"><svg viewBox="0 0 16 16" shape-rendering="crispEdges"><rect x="3" y="2" width="10" height="2" fill="#000080"/><rect x="3" y="11" width="10" height="2" fill="#000080"/><rect x="7" y="3" width="2" height="9" fill="#000080"/><path d="M10.5 6.5A2.5 2.5 0 1 1 8 10M6 7L7 9.5L9 8" stroke="#f00" stroke-width="1" fill="none" /></svg></div><div class="b" style="left:65px;top:377px"><svg viewBox="0 0 16 16" shape-rendering="crispEdges"><text x="1" y="12" font-family="Liberation Serif" font-size="10" font-weight="bold" fill="#000080" >Fe</text></svg></div><div class="b" style="left:65px;top:399px"><svg viewBox="0 0 16 16" shape-rendering="crispEdges"><text x="1" y="12" font-family="Liberation Serif" font-size="10" font-weight="bold" fill="#000080" >Fe</text><rect x="1" y="4" width="3" height="10" fill="#f00"/><rect x="1" y="4" width="5" height="2" fill="#f00"/></svg></div><div class="b" style="left:65px;top:421px"><svg viewBox="0 0 16 16" shape-rendering="crispEdges"><g transform="translate(1 1)" opacity="1"><text x="0" y="7" font-family="Liberation Sans" font-size="6.5"  fill="#fff" textLength="15" lengthAdjust="spacingAndGlyphs">Pick</text><text x="3" y="14" font-family="Liberation Sans" font-size="6.5"  fill="#fff" >BT</text></g><text x="0" y="7" font-family="Liberation Sans" font-size="6.5"  fill="#808080" textLength="15" lengthAdjust="spacingAndGlyphs">Pick</text><text x="3" y="14" font-family="Liberation Sans" font-size="6.5"  fill="#808080" >BT</text></svg></div><div class="b" style="left:65px;top:443px"><svg viewBox="0 0 16 16" shape-rendering="crispEdges"><g transform="translate(1 1)" opacity="1"><text x="4" y="13" font-family="Liberation Serif" font-size="13"  fill="#fff" font-style="italic">β</text></g><text x="4" y="13" font-family="Liberation Serif" font-size="13"  fill="#808080" font-style="italic">β</text></svg></div><div class="b" style="left:998px;top:76px"><svg viewBox="0 0 16 16" shape-rendering="crispEdges"><text x="3.5" y="13.5" font-family="Liberation Sans" font-size="14.5" font-weight="bold" fill="#000080" >?</text></svg></div><div class="b" style="left:998px;top:98px"><svg viewBox="0 0 16 16" shape-rendering="crispEdges"><text x="4.5" y="12" font-family="Liberation Sans" font-size="11"  fill="#f00" >?</text><rect x="1.0" y="11.5" width="2" height="2" fill="#ff0"/><rect x="12.0" y="2.0" width="2" height="2" fill="#ff0"/></svg></div><div class="b" style="left:998px;top:125px"><svg viewBox="0 0 16 16" shape-rendering="crispEdges"><text x="5.5" y="14" font-family="Liberation Sans" font-size="11"  fill="#f00" >?</text><rect x="3" y="1" width="4" height="4" fill="#ff0"/></svg></div><div class="b" style="left:998px;top:147px"><svg viewBox="0 0 16 16" shape-rendering="crispEdges"><rect x="0" y="7" width="16" height="3" fill="#000080"/><rect x="0" y="7" width="2" height="3" fill="#ff0"/><rect x="14" y="7" width="2" height="3" fill="#ff0"/><text x="4" y="12.5" font-family="Liberation Sans" font-size="11"  fill="#f00" >?</text></svg></div><div class="b" style="left:998px;top:174px"><svg viewBox="0 0 16 16" shape-rendering="crispEdges"><g transform="translate(1 1)" opacity="1"><text x="0.5" y="12" font-family="Liberation Sans" font-size="10"  fill="#fff" >Sel</text></g><text x="0.5" y="12" font-family="Liberation Sans" font-size="10"  fill="#808080" >Sel</text></svg></div><div class="b" style="left:998px;top:196px"><svg viewBox="0 0 16 16" shape-rendering="crispEdges"><g transform="translate(1 1)" opacity="1"><text x="0" y="12" font-family="Liberation Sans" font-size="10"  fill="#fff" >Sel</text><path d="M13 2V13M11 10L13 14L15 10" stroke="#fff" stroke-width="1" fill="none" /></g><text x="0" y="12" font-family="Liberation Sans" font-size="10"  fill="#808080" >Sel</text><path d="M13 2V13M11 10L13 14L15 10" stroke="#808080" stroke-width="1" fill="none" /></svg></div><div class="b" style="left:998px;top:218px"><svg viewBox="0 0 16 16" shape-rendering="crispEdges"><text x="1" y="13" font-family="Liberation Sans" font-size="11"  fill="#f00" >?</text><path d="M12 1V13M10 10L12 13.5L14 10" stroke="#0ff" stroke-width="1.4" fill="none" /></svg></div><div class="b" style="left:998px;top:240px"><svg viewBox="0 0 16 16" shape-rendering="crispEdges"><text x="1.5" y="9" font-family="Liberation Sans" font-size="9" font-weight="bold" fill="#000080" textLength="13" lengthAdjust="spacingAndGlyphs">112</text><text x="5.5" y="15.5" font-family="Liberation Sans" font-size="9"  fill="#f00" >?</text></svg></div><div class="a" style="left:995px;top:268px;width:29px;height:1px;background:#808080"></div><div class="a" style="left:995px;top:269px;width:29px;height:1px;background:#fff"></div><div class="a" style="left:995px;top:69px;width:29px;height:1px;background:#fff"></div><div class="a" style="left:91px;top:69px;width:1px;height:680px;background:#808080"></div><div class="a" style="left:92px;top:69px;width:1px;height:680px;background:#404040"></div><div class="a" style="left:92px;top:69px;width:902px;height:1px;background:#404040"></div><div class="a" style="left:993px;top:69px;width:1px;height:680px;background:#D4D0C8"></div><div class="a" style="left:994px;top:68px;width:1px;height:682px;background:#fff"></div><div class="a" style="left:92px;top:748px;width:902px;height:1px;background:#D4D0C8"></div><div class="a" style="left:0px;top:749px;width:1024px;height:1px;background:#fff"></div><div class="a chk" style="left:977px;top:70px;width:16px;height:662px"></div><div class="a chk" style="left:93px;top:732px;width:884px;height:16px"></div><div class="a" style="left:977px;top:732px;width:16px;height:16px;background:#D4D0C8"></div><div class="sb" style="left:977px;top:70px"><svg class="a" style="left:-1px;top:-1px" width="16" height="16" viewBox="0 0 16 16" shape-rendering="crispEdges"><g fill="#000"><rect x="7" y="6" width="1" height="1"/><rect x="6" y="7" width="3" height="1"/><rect x="5" y="8" width="5" height="1"/><rect x="4" y="9" width="7" height="1"/></g></svg></div><div class="sb" style="left:977px;top:716px"><svg class="a" style="left:-1px;top:-1px" width="16" height="16" viewBox="0 0 16 16" shape-rendering="crispEdges"><g fill="#000"><rect x="7" y="9" width="1" height="1"/><rect x="6" y="8" width="3" height="1"/><rect x="5" y="7" width="5" height="1"/><rect x="4" y="6" width="7" height="1"/></g></svg></div><div class="sb" style="left:93px;top:732px"><svg class="a" style="left:-1px;top:-1px" width="16" height="16" viewBox="0 0 16 16" shape-rendering="crispEdges"><g fill="#000"><rect x="5" y="7" width="1" height="1"/><rect x="6" y="6" width="1" height="3"/><rect x="7" y="5" width="1" height="5"/><rect x="8" y="4" width="1" height="7"/></g></svg></div><div class="sb" style="left:961px;top:732px"><svg class="a" style="left:-1px;top:-1px" width="16" height="16" viewBox="0 0 16 16" shape-rendering="crispEdges"><g fill="#000"><rect x="9" y="7" width="1" height="1"/><rect x="8" y="6" width="1" height="3"/><rect x="7" y="5" width="1" height="5"/><rect x="6" y="4" width="1" height="7"/></g></svg></div><div class="sb" style="left:977px;top:411px"></div><div class="sb" style="left:527px;top:732px"></div><div class="a t" style="left:2px;top:754px;font-size:11px;line-height:13px;white-space:nowrap;letter-spacing:-0.2px">Premere F1 per l'Help</div><div class="a" style="left:612px;top:752px;width:86px;height:15px;border-top:1px solid #fff;border-left:1px solid #fff;border-right:1px solid #808080"></div><div class="a" style="left:700px;top:752px;width:86px;height:15px;border-top:1px solid #fff;border-left:1px solid #fff;border-right:1px solid #808080"></div><div class="a" style="left:787px;top:752px;width:27px;height:15px;border-top:1px solid #fff;border-left:1px solid #fff;border-right:1px solid #808080"></div><div class="a" style="left:816px;top:752px;width:26px;height:15px;border-top:1px solid #fff;border-left:1px solid #fff;border-right:1px solid #808080"></div><div class="a" style="left:843px;top:752px;width:26px;height:15px;border-top:1px solid #fff;border-left:1px solid #fff;border-right:1px solid #808080"></div><div class="a" style="left:870px;top:752px;width:27px;height:15px;border-top:1px solid #fff;border-left:1px solid #fff;border-right:1px solid #808080"></div><div class="a" style="left:899px;top:752px;width:47px;height:15px;border-top:1px solid #fff;border-left:1px solid #fff;border-right:1px solid #808080"></div><div class="a" style="left:948px;top:752px;width:76px;height:15px;border-top:1px solid #fff;border-left:1px solid #fff;border-right:1px solid #808080"></div><div class="a t" style="left:614px;top:754px;font-size:11px;line-height:13px;white-space:nowrap;letter-spacing:0.29px">x= -5.99e+003</div><div class="a t" style="left:702px;top:754px;font-size:11px;line-height:13px;white-space:nowrap;letter-spacing:0.32px">y= 4.45e+003</div><div class="a t" style="left:792px;top:754px;font-size:11px;line-height:13px;white-space:nowrap;letter-spacing:0px">mm</div><div class="a t" style="left:823px;top:754px;font-size:11px;line-height:13px;white-space:nowrap;letter-spacing:0px">t</div><div class="a t" style="left:851.5px;top:754px;font-size:11px;line-height:13px;white-space:nowrap;letter-spacing:0px">s</div><div class="a t" style="left:875px;top:754px;font-size:11px;line-height:13px;white-space:nowrap;letter-spacing:0.8px">°C</div><div class="a t" style="left:900px;top:754px;font-size:11px;line-height:13px;white-space:nowrap;letter-spacing:0.5px">L=1</div><div class="a t" style="left:948px;top:754px;font-size:11px;line-height:13px;white-space:nowrap;letter-spacing:-0.75px">CNR SL</div><div class="a" style="left:995px;top:748px;width:29px;height:1px;background:#808080"></div><svg class="a" style="left:93px;top:70px" width="884" height="662" viewBox="93 70 884 662" shape-rendering="crispEdges"><rect x="93" y="70" width="884" height="662" fill="#FAFAFA"/><path d="M115 82h1v1h-1zM114 83h1v1h-1zM116 83h1v1h-1zM115 84h1v1h-1zM115 142h1v1h-1zM114 143h1v1h-1zM116 143h1v1h-1zM115 144h1v1h-1zM115 202h1v1h-1zM114 203h1v1h-1zM116 203h1v1h-1zM115 204h1v1h-1zM115 262h1v1h-1zM114 263h1v1h-1zM116 263h1v1h-1zM115 264h1v1h-1zM115 322h1v1h-1zM114 323h1v1h-1zM116 323h1v1h-1zM115 324h1v1h-1zM115 381h1v1h-1zM114 382h1v1h-1zM116 382h1v1h-1zM115 383h1v1h-1zM115 441h1v1h-1zM114 442h1v1h-1zM116 442h1v1h-1zM115 443h1v1h-1zM115 501h1v1h-1zM114 502h1v1h-1zM116 502h1v1h-1zM115 503h1v1h-1zM115 561h1v1h-1zM114 562h1v1h-1zM116 562h1v1h-1zM115 563h1v1h-1zM115 621h1v1h-1zM114 622h1v1h-1zM116 622h1v1h-1zM115 623h1v1h-1zM115 681h1v1h-1zM114 682h1v1h-1zM116 682h1v1h-1zM115 683h1v1h-1zM175 82h1v1h-1zM174 83h1v1h-1zM176 83h1v1h-1zM175 84h1v1h-1zM175 142h1v1h-1zM174 143h1v1h-1zM176 143h1v1h-1zM175 144h1v1h-1zM175 202h1v1h-1zM174 203h1v1h-1zM176 203h1v1h-1zM175 204h1v1h-1zM175 262h1v1h-1zM174 263h1v1h-1zM176 263h1v1h-1zM175 264h1v1h-1zM175 322h1v1h-1zM174 323h1v1h-1zM176 323h1v1h-1zM175 324h1v1h-1zM175 381h1v1h-1zM174 382h1v1h-1zM176 382h1v1h-1zM175 383h1v1h-1zM175 441h1v1h-1zM174 442h1v1h-1zM176 442h1v1h-1zM175 443h1v1h-1zM175 501h1v1h-1zM174 502h1v1h-1zM176 502h1v1h-1zM175 503h1v1h-1zM175 561h1v1h-1zM174 562h1v1h-1zM176 562h1v1h-1zM175 563h1v1h-1zM175 621h1v1h-1zM174 622h1v1h-1zM176 622h1v1h-1zM175 623h1v1h-1zM175 681h1v1h-1zM174 682h1v1h-1zM176 682h1v1h-1zM175 683h1v1h-1zM235 82h1v1h-1zM234 83h1v1h-1zM236 83h1v1h-1zM235 84h1v1h-1zM235 142h1v1h-1zM234 143h1v1h-1zM236 143h1v1h-1zM235 144h1v1h-1zM235 202h1v1h-1zM234 203h1v1h-1zM236 203h1v1h-1zM235 204h1v1h-1zM235 262h1v1h-1zM234 263h1v1h-1zM236 263h1v1h-1zM235 264h1v1h-1zM235 322h1v1h-1zM234 323h1v1h-1zM236 323h1v1h-1zM235 324h1v1h-1zM235 381h1v1h-1zM234 382h1v1h-1zM236 382h1v1h-1zM235 383h1v1h-1zM235 441h1v1h-1zM234 442h1v1h-1zM236 442h1v1h-1zM235 443h1v1h-1zM235 501h1v1h-1zM234 502h1v1h-1zM236 502h1v1h-1zM235 503h1v1h-1zM235 561h1v1h-1zM234 562h1v1h-1zM236 562h1v1h-1zM235 563h1v1h-1zM235 621h1v1h-1zM234 622h1v1h-1zM236 622h1v1h-1zM235 623h1v1h-1zM235 681h1v1h-1zM234 682h1v1h-1zM236 682h1v1h-1zM235 683h1v1h-1zM295 82h1v1h-1zM294 83h1v1h-1zM296 83h1v1h-1zM295 84h1v1h-1zM295 142h1v1h-1zM294 143h1v1h-1zM296 143h1v1h-1zM295 144h1v1h-1zM295 202h1v1h-1zM294 203h1v1h-1zM296 203h1v1h-1zM295 204h1v1h-1zM295 262h1v1h-1zM294 263h1v1h-1zM296 263h1v1h-1zM295 264h1v1h-1zM295 322h1v1h-1zM294 323h1v1h-1zM296 323h1v1h-1zM295 324h1v1h-1zM295 381h1v1h-1zM294 382h1v1h-1zM296 382h1v1h-1zM295 383h1v1h-1zM295 441h1v1h-1zM294 442h1v1h-1zM296 442h1v1h-1zM295 443h1v1h-1zM295 501h1v1h-1zM294 502h1v1h-1zM296 502h1v1h-1zM295 503h1v1h-1zM295 561h1v1h-1zM294 562h1v1h-1zM296 562h1v1h-1zM295 563h1v1h-1zM295 621h1v1h-1zM294 622h1v1h-1zM296 622h1v1h-1zM295 623h1v1h-1zM295 681h1v1h-1zM294 682h1v1h-1zM296 682h1v1h-1zM295 683h1v1h-1zM355 82h1v1h-1zM354 83h1v1h-1zM356 83h1v1h-1zM355 84h1v1h-1zM355 142h1v1h-1zM354 143h1v1h-1zM356 143h1v1h-1zM355 144h1v1h-1zM355 202h1v1h-1zM354 203h1v1h-1zM356 203h1v1h-1zM355 204h1v1h-1zM355 262h1v1h-1zM354 263h1v1h-1zM356 263h1v1h-1zM355 264h1v1h-1zM355 322h1v1h-1zM354 323h1v1h-1zM356 323h1v1h-1zM355 324h1v1h-1zM355 381h1v1h-1zM354 382h1v1h-1zM356 382h1v1h-1zM355 383h1v1h-1zM355 441h1v1h-1zM354 442h1v1h-1zM356 442h1v1h-1zM355 443h1v1h-1zM355 501h1v1h-1zM354 502h1v1h-1zM356 502h1v1h-1zM355 503h1v1h-1zM355 561h1v1h-1zM354 562h1v1h-1zM356 562h1v1h-1zM355 563h1v1h-1zM355 621h1v1h-1zM354 622h1v1h-1zM356 622h1v1h-1zM355 623h1v1h-1zM355 681h1v1h-1zM354 682h1v1h-1zM356 682h1v1h-1zM355 683h1v1h-1zM414 82h1v1h-1zM413 83h1v1h-1zM415 83h1v1h-1zM414 84h1v1h-1zM414 142h1v1h-1zM413 143h1v1h-1zM415 143h1v1h-1zM414 144h1v1h-1zM414 202h1v1h-1zM413 203h1v1h-1zM415 203h1v1h-1zM414 204h1v1h-1zM414 262h1v1h-1zM413 263h1v1h-1zM415 263h1v1h-1zM414 264h1v1h-1zM414 322h1v1h-1zM413 323h1v1h-1zM415 323h1v1h-1zM414 324h1v1h-1zM414 381h1v1h-1zM413 382h1v1h-1zM415 382h1v1h-1zM414 383h1v1h-1zM414 441h1v1h-1zM413 442h1v1h-1zM415 442h1v1h-1zM414 443h1v1h-1zM414 501h1v1h-1zM413 502h1v1h-1zM415 502h1v1h-1zM414 503h1v1h-1zM414 561h1v1h-1zM413 562h1v1h-1zM415 562h1v1h-1zM414 563h1v1h-1zM414 621h1v1h-1zM413 622h1v1h-1zM415 622h1v1h-1zM414 623h1v1h-1zM414 681h1v1h-1zM413 682h1v1h-1zM415 682h1v1h-1zM414 683h1v1h-1zM474 82h1v1h-1zM473 83h1v1h-1zM475 83h1v1h-1zM474 84h1v1h-1zM474 142h1v1h-1zM473 143h1v1h-1zM475 143h1v1h-1zM474 144h1v1h-1zM474 202h1v1h-1zM473 203h1v1h-1zM475 203h1v1h-1zM474 204h1v1h-1zM474 262h1v1h-1zM473 263h1v1h-1zM475 263h1v1h-1zM474 264h1v1h-1zM474 322h1v1h-1zM473 323h1v1h-1zM475 323h1v1h-1zM474 324h1v1h-1zM474 381h1v1h-1zM473 382h1v1h-1zM475 382h1v1h-1zM474 383h1v1h-1zM474 441h1v1h-1zM473 442h1v1h-1zM475 442h1v1h-1zM474 443h1v1h-1zM474 501h1v1h-1zM473 502h1v1h-1zM475 502h1v1h-1zM474 503h1v1h-1zM474 561h1v1h-1zM473 562h1v1h-1zM475 562h1v1h-1zM474 563h1v1h-1zM474 621h1v1h-1zM473 622h1v1h-1zM475 622h1v1h-1zM474 623h1v1h-1zM474 681h1v1h-1zM473 682h1v1h-1zM475 682h1v1h-1zM474 683h1v1h-1zM534 82h1v1h-1zM533 83h1v1h-1zM535 83h1v1h-1zM534 84h1v1h-1zM534 142h1v1h-1zM533 143h1v1h-1zM535 143h1v1h-1zM534 144h1v1h-1zM534 202h1v1h-1zM533 203h1v1h-1zM535 203h1v1h-1zM534 204h1v1h-1zM534 262h1v1h-1zM533 263h1v1h-1zM535 263h1v1h-1zM534 264h1v1h-1zM534 322h1v1h-1zM533 323h1v1h-1zM535 323h1v1h-1zM534 324h1v1h-1zM534 381h1v1h-1zM533 382h1v1h-1zM535 382h1v1h-1zM534 383h1v1h-1zM534 441h1v1h-1zM533 442h1v1h-1zM535 442h1v1h-1zM534 443h1v1h-1zM534 501h1v1h-1zM533 502h1v1h-1zM535 502h1v1h-1zM534 503h1v1h-1zM534 561h1v1h-1zM533 562h1v1h-1zM535 562h1v1h-1zM534 563h1v1h-1zM534 621h1v1h-1zM533 622h1v1h-1zM535 622h1v1h-1zM534 623h1v1h-1zM534 681h1v1h-1zM533 682h1v1h-1zM535 682h1v1h-1zM534 683h1v1h-1zM594 82h1v1h-1zM593 83h1v1h-1zM595 83h1v1h-1zM594 84h1v1h-1zM594 142h1v1h-1zM593 143h1v1h-1zM595 143h1v1h-1zM594 144h1v1h-1zM594 202h1v1h-1zM593 203h1v1h-1zM595 203h1v1h-1zM594 204h1v1h-1zM594 262h1v1h-1zM593 263h1v1h-1zM595 263h1v1h-1zM594 264h1v1h-1zM594 322h1v1h-1zM593 323h1v1h-1zM595 323h1v1h-1zM594 324h1v1h-1zM594 381h1v1h-1zM593 382h1v1h-1zM595 382h1v1h-1zM594 383h1v1h-1zM594 441h1v1h-1zM593 442h1v1h-1zM595 442h1v1h-1zM594 443h1v1h-1zM594 501h1v1h-1zM593 502h1v1h-1zM595 502h1v1h-1zM594 503h1v1h-1zM594 561h1v1h-1zM593 562h1v1h-1zM595 562h1v1h-1zM594 563h1v1h-1zM594 621h1v1h-1zM593 622h1v1h-1zM595 622h1v1h-1zM594 623h1v1h-1zM594 681h1v1h-1zM593 682h1v1h-1zM595 682h1v1h-1zM594 683h1v1h-1zM654 82h1v1h-1zM653 83h1v1h-1zM655 83h1v1h-1zM654 84h1v1h-1zM654 142h1v1h-1zM653 143h1v1h-1zM655 143h1v1h-1zM654 144h1v1h-1zM654 202h1v1h-1zM653 203h1v1h-1zM655 203h1v1h-1zM654 204h1v1h-1zM654 262h1v1h-1zM653 263h1v1h-1zM655 263h1v1h-1zM654 264h1v1h-1zM654 322h1v1h-1zM653 323h1v1h-1zM655 323h1v1h-1zM654 324h1v1h-1zM654 381h1v1h-1zM653 382h1v1h-1zM655 382h1v1h-1zM654 383h1v1h-1zM654 441h1v1h-1zM653 442h1v1h-1zM655 442h1v1h-1zM654 443h1v1h-1zM654 501h1v1h-1zM653 502h1v1h-1zM655 502h1v1h-1zM654 503h1v1h-1zM654 561h1v1h-1zM653 562h1v1h-1zM655 562h1v1h-1zM654 563h1v1h-1zM654 621h1v1h-1zM653 622h1v1h-1zM655 622h1v1h-1zM654 623h1v1h-1zM654 681h1v1h-1zM653 682h1v1h-1zM655 682h1v1h-1zM654 683h1v1h-1zM714 82h1v1h-1zM713 83h1v1h-1zM715 83h1v1h-1zM714 84h1v1h-1zM714 142h1v1h-1zM713 143h1v1h-1zM715 143h1v1h-1zM714 144h1v1h-1zM714 202h1v1h-1zM713 203h1v1h-1zM715 203h1v1h-1zM714 204h1v1h-1zM714 262h1v1h-1zM713 263h1v1h-1zM715 263h1v1h-1zM714 264h1v1h-1zM714 322h1v1h-1zM713 323h1v1h-1zM715 323h1v1h-1zM714 324h1v1h-1zM714 381h1v1h-1zM713 382h1v1h-1zM715 382h1v1h-1zM714 383h1v1h-1zM714 441h1v1h-1zM713 442h1v1h-1zM715 442h1v1h-1zM714 443h1v1h-1zM714 501h1v1h-1zM713 502h1v1h-1zM715 502h1v1h-1zM714 503h1v1h-1zM714 561h1v1h-1zM713 562h1v1h-1zM715 562h1v1h-1zM714 563h1v1h-1zM714 621h1v1h-1zM713 622h1v1h-1zM715 622h1v1h-1zM714 623h1v1h-1zM714 681h1v1h-1zM713 682h1v1h-1zM715 682h1v1h-1zM714 683h1v1h-1zM774 82h1v1h-1zM773 83h1v1h-1zM775 83h1v1h-1zM774 84h1v1h-1zM774 142h1v1h-1zM773 143h1v1h-1zM775 143h1v1h-1zM774 144h1v1h-1zM774 202h1v1h-1zM773 203h1v1h-1zM775 203h1v1h-1zM774 204h1v1h-1zM774 262h1v1h-1zM773 263h1v1h-1zM775 263h1v1h-1zM774 264h1v1h-1zM774 322h1v1h-1zM773 323h1v1h-1zM775 323h1v1h-1zM774 324h1v1h-1zM774 381h1v1h-1zM773 382h1v1h-1zM775 382h1v1h-1zM774 383h1v1h-1zM774 441h1v1h-1zM773 442h1v1h-1zM775 442h1v1h-1zM774 443h1v1h-1zM774 501h1v1h-1zM773 502h1v1h-1zM775 502h1v1h-1zM774 503h1v1h-1zM774 561h1v1h-1zM773 562h1v1h-1zM775 562h1v1h-1zM774 563h1v1h-1zM774 621h1v1h-1zM773 622h1v1h-1zM775 622h1v1h-1zM774 623h1v1h-1zM774 681h1v1h-1zM773 682h1v1h-1zM775 682h1v1h-1zM774 683h1v1h-1zM833 82h1v1h-1zM832 83h1v1h-1zM834 83h1v1h-1zM833 84h1v1h-1zM833 142h1v1h-1zM832 143h1v1h-1zM834 143h1v1h-1zM833 144h1v1h-1zM833 202h1v1h-1zM832 203h1v1h-1zM834 203h1v1h-1zM833 204h1v1h-1zM833 262h1v1h-1zM832 263h1v1h-1zM834 263h1v1h-1zM833 264h1v1h-1zM833 322h1v1h-1zM832 323h1v1h-1zM834 323h1v1h-1zM833 324h1v1h-1zM833 381h1v1h-1zM832 382h1v1h-1zM834 382h1v1h-1zM833 383h1v1h-1zM833 441h1v1h-1zM832 442h1v1h-1zM834 442h1v1h-1zM833 443h1v1h-1zM833 501h1v1h-1zM832 502h1v1h-1zM834 502h1v1h-1zM833 503h1v1h-1zM833 561h1v1h-1zM832 562h1v1h-1zM834 562h1v1h-1zM833 563h1v1h-1zM833 621h1v1h-1zM832 622h1v1h-1zM834 622h1v1h-1zM833 623h1v1h-1zM833 681h1v1h-1zM832 682h1v1h-1zM834 682h1v1h-1zM833 683h1v1h-1zM893 82h1v1h-1zM892 83h1v1h-1zM894 83h1v1h-1zM893 84h1v1h-1zM893 142h1v1h-1zM892 143h1v1h-1zM894 143h1v1h-1zM893 144h1v1h-1zM893 202h1v1h-1zM892 203h1v1h-1zM894 203h1v1h-1zM893 204h1v1h-1zM893 262h1v1h-1zM892 263h1v1h-1zM894 263h1v1h-1zM893 264h1v1h-1zM893 322h1v1h-1zM892 323h1v1h-1zM894 323h1v1h-1zM893 324h1v1h-1zM893 381h1v1h-1zM892 382h1v1h-1zM894 382h1v1h-1zM893 383h1v1h-1zM893 441h1v1h-1zM892 442h1v1h-1zM894 442h1v1h-1zM893 443h1v1h-1zM893 501h1v1h-1zM892 502h1v1h-1zM894 502h1v1h-1zM893 503h1v1h-1zM893 561h1v1h-1zM892 562h1v1h-1zM894 562h1v1h-1zM893 563h1v1h-1zM893 621h1v1h-1zM892 622h1v1h-1zM894 622h1v1h-1zM893 623h1v1h-1zM893 681h1v1h-1zM892 682h1v1h-1zM894 682h1v1h-1zM893 683h1v1h-1zM953 82h1v1h-1zM952 83h1v1h-1zM954 83h1v1h-1zM953 84h1v1h-1zM953 142h1v1h-1zM952 143h1v1h-1zM954 143h1v1h-1zM953 144h1v1h-1zM953 202h1v1h-1zM952 203h1v1h-1zM954 203h1v1h-1zM953 204h1v1h-1zM953 262h1v1h-1zM952 263h1v1h-1zM954 263h1v1h-1zM953 264h1v1h-1zM953 322h1v1h-1zM952 323h1v1h-1zM954 323h1v1h-1zM953 324h1v1h-1zM953 381h1v1h-1zM952 382h1v1h-1zM954 382h1v1h-1zM953 383h1v1h-1zM953 441h1v1h-1zM952 442h1v1h-1zM954 442h1v1h-1zM953 443h1v1h-1zM953 501h1v1h-1zM952 502h1v1h-1zM954 502h1v1h-1zM953 503h1v1h-1zM953 561h1v1h-1zM952 562h1v1h-1zM954 562h1v1h-1zM953 563h1v1h-1zM953 621h1v1h-1zM952 622h1v1h-1zM954 622h1v1h-1zM953 623h1v1h-1zM953 681h1v1h-1zM952 682h1v1h-1zM954 682h1v1h-1zM953 683h1v1h-1z" fill="#f00"/><line x1="175" y1="143" x2="175" y2="203" stroke="#00f" stroke-width="2"/><line x1="235" y1="143" x2="235" y2="203" stroke="#00f" stroke-width="2"/><line x1="235" y1="203" x2="295" y2="143" stroke="#00f" stroke-width="2.8"/><line x1="235" y1="203" x2="295" y2="203" stroke="#00f" stroke-width="2"/><line x1="355" y1="143" x2="355" y2="203" stroke="#00f" stroke-width="2"/><line x1="415" y1="143" x2="415" y2="203" stroke="#00f" stroke-width="2"/><line x1="475" y1="143" x2="475" y2="203" stroke="#00f" stroke-width="2"/><line x1="535" y1="143" x2="535" y2="203" stroke="#00f" stroke-width="2"/><line x1="595" y1="143" x2="595" y2="203" stroke="#00f" stroke-width="2"/><line x1="654" y1="143" x2="654" y2="203" stroke="#00f" stroke-width="2"/><line x1="714" y1="143" x2="714" y2="203" stroke="#00f" stroke-width="2"/><line x1="175" y1="263" x2="175" y2="323" stroke="#00f" stroke-width="2"/><line x1="235" y1="263" x2="235" y2="323" stroke="#00f" stroke-width="2"/><line x1="295" y1="263" x2="235" y2="323" stroke="#00f" stroke-width="2.8"/><line x1="355" y1="263" x2="355" y2="323" stroke="#00f" stroke-width="2"/><line x1="355" y1="323" x2="415" y2="323" stroke="#00f" stroke-width="2"/><line x1="415" y1="263" x2="475" y2="323" stroke="#00f" stroke-width="2.8"/><line x1="475" y1="263" x2="475" y2="323" stroke="#00f" stroke-width="2"/><line x1="535" y1="263" x2="475" y2="323" stroke="#00f" stroke-width="2.8"/><line x1="595" y1="263" x2="714" y2="263" stroke="#00f" stroke-width="2"/><line x1="595" y1="263" x2="654" y2="323" stroke="#00f" stroke-width="2.8"/><line x1="714" y1="263" x2="654" y2="323" stroke="#00f" stroke-width="2.8"/><line x1="654" y1="263" x2="654" y2="323" stroke="#00f" stroke-width="2"/><line x1="175" y1="382" x2="235" y2="442" stroke="#00f" stroke-width="2.8"/><line x1="235" y1="382" x2="235" y2="442" stroke="#00f" stroke-width="2"/><line x1="295" y1="382" x2="235" y2="442" stroke="#00f" stroke-width="2.8"/><line x1="355" y1="382" x2="475" y2="442" stroke="#00f" stroke-width="2.8"/><line x1="535" y1="382" x2="475" y2="442" stroke="#00f" stroke-width="2.8"/><line x1="595" y1="382" x2="654" y2="442" stroke="#00f" stroke-width="2.8"/><line x1="654" y1="382" x2="714" y2="382" stroke="#00f" stroke-width="2"/><line x1="714" y1="382" x2="654" y2="442" stroke="#00f" stroke-width="2.8"/><line x1="175" y1="502" x2="235" y2="502" stroke="#00f" stroke-width="2"/><line x1="175" y1="502" x2="175" y2="562" stroke="#00f" stroke-width="2"/><line x1="235" y1="502" x2="295" y2="562" stroke="#00f" stroke-width="2.8"/><line x1="355" y1="502" x2="475" y2="502" stroke="#00f" stroke-width="2"/><line x1="475" y1="502" x2="475" y2="562" stroke="#00f" stroke-width="2"/><line x1="654" y1="502" x2="654" y2="562" stroke="#00f" stroke-width="2"/><line x1="175" y1="622" x2="295" y2="622" stroke="#00f" stroke-width="2"/><line x1="235" y1="622" x2="235" y2="682" stroke="#00f" stroke-width="2"/><line x1="415" y1="622" x2="535" y2="622" stroke="#00f" stroke-width="2"/><line x1="475" y1="622" x2="475" y2="682" stroke="#00f" stroke-width="2"/><line x1="595" y1="622" x2="714" y2="622" stroke="#00f" stroke-width="2"/><line x1="654" y1="622" x2="654" y2="682" stroke="#00f" stroke-width="2"/><line x1="535" y1="502" x2="483" y2="555" stroke="#00f" stroke-width="2"/><path d="M475 547H477.5V569.5H475M487 546H482.5V568.5H487" fill="none" stroke="#00f" stroke-width="2"/><circle cx="654" cy="263" r="7" fill="#FAFAFA" stroke="#00f" stroke-width="2.5"/><circle cx="235" cy="622" r="7" fill="#FAFAFA" stroke="#00f" stroke-width="2.5"/><rect x="352" y="260" width="6" height="6" fill="#000"/><rect x="353" y="261" width="4" height="4" fill="#c8c8c8"/><rect x="292" y="140" width="7" height="6" fill="#000"/><rect x="293" y="141" width="5" height="4" fill="#c8c8c8"/><rect x="412" y="320" width="7" height="6" fill="#000"/><rect x="413" y="321" width="5" height="4" fill="#c8c8c8"/><rect x="412" y="140" width="7" height="6" fill="#000"/><rect x="413" y="141" width="5" height="4" fill="#c8c8c8"/><rect x="651" y="200" width="7" height="6" fill="#000"/><rect x="652" y="201" width="5" height="4" fill="#c8c8c8"/><rect x="651" y="379" width="7" height="7" fill="#000"/><rect x="652" y="380" width="5" height="5" fill="#c8c8c8"/><rect x="592" y="260" width="7" height="6" fill="#000"/><rect x="593" y="261" width="5" height="4" fill="#c8c8c8"/><rect x="592" y="619" width="7" height="6" fill="#000"/><rect x="593" y="620" width="5" height="4" fill="#c8c8c8"/><rect x="651" y="559" width="7" height="7" fill="#000"/><rect x="652" y="560" width="5" height="5" fill="#c8c8c8"/><rect x="232" y="200" width="6" height="6" fill="#000"/><rect x="233" y="201" width="4" height="4" fill="#c8c8c8"/><rect x="711" y="260" width="7" height="6" fill="#000"/><rect x="712" y="261" width="5" height="4" fill="#c8c8c8"/><rect x="711" y="619" width="7" height="6" fill="#000"/><rect x="712" y="620" width="5" height="4" fill="#c8c8c8"/><rect x="232" y="379" width="6" height="7" fill="#000"/><rect x="233" y="380" width="4" height="5" fill="#c8c8c8"/><rect x="172" y="260" width="7" height="6" fill="#000"/><rect x="173" y="261" width="5" height="4" fill="#c8c8c8"/><rect x="172" y="619" width="7" height="6" fill="#000"/><rect x="173" y="620" width="5" height="4" fill="#c8c8c8"/><rect x="472" y="200" width="6" height="6" fill="#000"/><rect x="473" y="201" width="4" height="4" fill="#c8c8c8"/><rect x="532" y="140" width="7" height="6" fill="#000"/><rect x="533" y="141" width="5" height="4" fill="#c8c8c8"/><rect x="532" y="499" width="7" height="7" fill="#000"/><rect x="533" y="500" width="5" height="5" fill="#c8c8c8"/><rect x="472" y="559" width="6" height="7" fill="#000"/><rect x="473" y="560" width="4" height="5" fill="#c8c8c8"/><rect x="352" y="200" width="6" height="6" fill="#000"/><rect x="353" y="201" width="4" height="4" fill="#c8c8c8"/><rect x="352" y="379" width="6" height="7" fill="#000"/><rect x="353" y="380" width="4" height="5" fill="#c8c8c8"/><rect x="292" y="260" width="7" height="6" fill="#000"/><rect x="293" y="261" width="5" height="4" fill="#c8c8c8"/><rect x="292" y="619" width="7" height="6" fill="#000"/><rect x="293" y="620" width="5" height="4" fill="#c8c8c8"/><rect x="412" y="260" width="7" height="6" fill="#000"/><rect x="413" y="261" width="5" height="4" fill="#c8c8c8"/><rect x="592" y="200" width="7" height="6" fill="#000"/><rect x="593" y="201" width="5" height="4" fill="#c8c8c8"/><rect x="412" y="619" width="7" height="6" fill="#000"/><rect x="413" y="620" width="5" height="4" fill="#c8c8c8"/><rect x="651" y="140" width="7" height="6" fill="#000"/><rect x="652" y="141" width="5" height="4" fill="#c8c8c8"/><rect x="651" y="499" width="7" height="7" fill="#000"/><rect x="652" y="500" width="5" height="5" fill="#c8c8c8"/><rect x="592" y="379" width="7" height="7" fill="#000"/><rect x="593" y="380" width="5" height="5" fill="#c8c8c8"/><rect x="711" y="200" width="7" height="6" fill="#000"/><rect x="712" y="201" width="5" height="4" fill="#c8c8c8"/><rect x="651" y="320" width="7" height="6" fill="#000"/><rect x="652" y="321" width="5" height="4" fill="#c8c8c8"/><rect x="651" y="679" width="7" height="6" fill="#000"/><rect x="652" y="680" width="5" height="4" fill="#c8c8c8"/><rect x="232" y="320" width="6" height="6" fill="#000"/><rect x="233" y="321" width="4" height="4" fill="#c8c8c8"/><rect x="172" y="200" width="7" height="6" fill="#000"/><rect x="173" y="201" width="5" height="4" fill="#c8c8c8"/><rect x="711" y="379" width="7" height="7" fill="#000"/><rect x="712" y="380" width="5" height="5" fill="#c8c8c8"/><rect x="232" y="140" width="6" height="6" fill="#000"/><rect x="233" y="141" width="4" height="4" fill="#c8c8c8"/><rect x="232" y="499" width="6" height="7" fill="#000"/><rect x="233" y="500" width="4" height="5" fill="#c8c8c8"/><rect x="172" y="379" width="7" height="7" fill="#000"/><rect x="173" y="380" width="5" height="5" fill="#c8c8c8"/><rect x="472" y="140" width="6" height="6" fill="#000"/><rect x="473" y="141" width="4" height="4" fill="#c8c8c8"/><rect x="232" y="679" width="6" height="6" fill="#000"/><rect x="233" y="680" width="4" height="4" fill="#c8c8c8"/><rect x="172" y="559" width="7" height="7" fill="#000"/><rect x="173" y="560" width="5" height="5" fill="#c8c8c8"/><rect x="472" y="320" width="6" height="6" fill="#000"/><rect x="473" y="321" width="4" height="4" fill="#c8c8c8"/><rect x="532" y="260" width="7" height="6" fill="#000"/><rect x="533" y="261" width="5" height="4" fill="#c8c8c8"/><rect x="532" y="619" width="7" height="6" fill="#000"/><rect x="533" y="620" width="5" height="4" fill="#c8c8c8"/><rect x="472" y="499" width="6" height="7" fill="#000"/><rect x="473" y="500" width="4" height="5" fill="#c8c8c8"/><rect x="472" y="679" width="6" height="6" fill="#000"/><rect x="473" y="680" width="4" height="4" fill="#c8c8c8"/><rect x="292" y="200" width="7" height="6" fill="#000"/><rect x="293" y="201" width="5" height="4" fill="#c8c8c8"/><rect x="352" y="140" width="6" height="6" fill="#000"/><rect x="353" y="141" width="4" height="4" fill="#c8c8c8"/><rect x="352" y="499" width="6" height="7" fill="#000"/><rect x="353" y="500" width="4" height="5" fill="#c8c8c8"/><rect x="292" y="379" width="7" height="7" fill="#000"/><rect x="293" y="380" width="5" height="5" fill="#c8c8c8"/><rect x="412" y="200" width="7" height="6" fill="#000"/><rect x="413" y="201" width="5" height="4" fill="#c8c8c8"/><rect x="352" y="320" width="6" height="6" fill="#000"/><rect x="353" y="321" width="4" height="4" fill="#c8c8c8"/><rect x="292" y="559" width="7" height="7" fill="#000"/><rect x="293" y="560" width="5" height="5" fill="#c8c8c8"/><rect x="651" y="260" width="7" height="6" fill="#000"/><rect x="652" y="261" width="5" height="4" fill="#c8c8c8"/><rect x="592" y="140" width="7" height="6" fill="#000"/><rect x="593" y="141" width="5" height="4" fill="#c8c8c8"/><rect x="651" y="619" width="7" height="6" fill="#000"/><rect x="652" y="620" width="5" height="4" fill="#c8c8c8"/><rect x="172" y="140" width="7" height="6" fill="#000"/><rect x="173" y="141" width="5" height="4" fill="#c8c8c8"/><rect x="651" y="439" width="7" height="7" fill="#000"/><rect x="652" y="440" width="5" height="5" fill="#c8c8c8"/><rect x="711" y="140" width="7" height="6" fill="#000"/><rect x="712" y="141" width="5" height="4" fill="#c8c8c8"/><rect x="172" y="320" width="7" height="6" fill="#000"/><rect x="173" y="321" width="5" height="4" fill="#c8c8c8"/><rect x="232" y="260" width="6" height="6" fill="#000"/><rect x="233" y="261" width="4" height="4" fill="#c8c8c8"/><rect x="232" y="619" width="6" height="6" fill="#000"/><rect x="233" y="620" width="4" height="4" fill="#c8c8c8"/><rect x="172" y="499" width="7" height="7" fill="#000"/><rect x="173" y="500" width="5" height="5" fill="#c8c8c8"/><rect x="232" y="439" width="6" height="7" fill="#000"/><rect x="233" y="440" width="4" height="5" fill="#c8c8c8"/><rect x="532" y="200" width="7" height="6" fill="#000"/><rect x="533" y="201" width="5" height="4" fill="#c8c8c8"/><rect x="472" y="439" width="6" height="7" fill="#000"/><rect x="473" y="440" width="4" height="5" fill="#c8c8c8"/><rect x="532" y="379" width="7" height="7" fill="#000"/><rect x="533" y="380" width="5" height="5" fill="#c8c8c8"/><rect x="472" y="260" width="6" height="6" fill="#000"/><rect x="473" y="261" width="4" height="4" fill="#c8c8c8"/><rect x="472" y="619" width="6" height="6" fill="#000"/><rect x="473" y="620" width="4" height="4" fill="#c8c8c8"/><g transform="translate(175 203) rotate(0)" fill="none" stroke="#f00" stroke-width="2.2"><path d="M-15 0H16M-15.0 0L-21.0 6.5M-7.2 0L-13.2 6.5M0.6 0L-5.4 6.5M8.4 0L2.4 6.5M16.2 0L10.2 6.5"/></g><g transform="translate(235 203) rotate(45)" fill="none" stroke="#f00" stroke-width="2.2"><path d="M4.95 -4.95A7 7 0 1 1 -4.95 -4.95"/><path d="M-4 8L-11 21M0 8V25M4 8L12 21"/></g><g transform="translate(355 203) rotate(0)" fill="none" stroke="#f00" stroke-width="2.2"><path d="M-4 -17V17M4 -17V17M-9 -21.0L-4 -16.0M9 -21.0L4 -16.0M-9 -13.8L-4 -8.8M9 -13.8L4 -8.8M-9 -6.5L-4 -1.5M9 -6.5L4 -1.5M-9 0.8L-4 5.8M9 0.8L4 5.8M-9 8.0L-4 13.0M9 8.0L4 13.0"/></g><g transform="translate(415 203) rotate(0)" fill="none" stroke="#f00" stroke-width="2.2"><path d="M-16 -8V0H16V-8M-15 4H16M-15.0 4L-9.0 10M-7.2 4L-1.2 10M0.6 4L6.6 10M8.4 4L14.4 10M16.2 4L22.2 10"/></g><g transform="translate(475 203) rotate(-45)" fill="none" stroke="#f00" stroke-width="2.2"><path d="M-16 -8V0H16V-8M-15 4H16M-15.0 4L-9.0 10M-7.2 4L-1.2 10M0.6 4L6.6 10M8.4 4L14.4 10M16.2 4L22.2 10"/></g><g transform="translate(535 203) rotate(45)" fill="none" stroke="#f00" stroke-width="2.2"><path d="M-16 -8V0H16V-8M-15 4H16M-15.0 4L-9.0 10M-7.2 4L-1.2 10M0.6 4L6.6 10M8.4 4L14.4 10M16.2 4L22.2 10"/></g><g transform="translate(595 203) rotate(0)" fill="none" stroke="#f00" stroke-width="2.2"><circle cx="0" cy="0" r="7"/><path d="M-7.5 0L-12.5 13M7.5 0L12.5 13"/><rect x="-12.5" y="13" width="25" height="6.5"/><path d="M-4.5 13V19.5M3.5 13V19.5"/><path d="M-12 20L-8 25M-6 20L-2 25M0 20L4 25M6 20L10 25M12 20L16 25"/></g><g transform="translate(654 203) rotate(-45)" fill="none" stroke="#f00" stroke-width="2.2"><circle cx="0" cy="0" r="7"/><path d="M-7.5 0L-12.5 13M7.5 0L12.5 13"/><rect x="-12.5" y="13" width="25" height="6.5"/><path d="M-4.5 13V19.5M3.5 13V19.5"/><path d="M-12 20L-8 25M-6 20L-2 25M0 20L4 25M6 20L10 25M12 20L16 25"/></g><g transform="translate(714 203) rotate(45)" fill="none" stroke="#f00" stroke-width="2.2"><circle cx="0" cy="0" r="7"/><path d="M-7.5 0L-12.5 13M7.5 0L12.5 13"/><rect x="-12.5" y="13" width="25" height="6.5"/><path d="M-4.5 13V19.5M3.5 13V19.5"/><path d="M-12 20L-8 25M-6 20L-2 25M0 20L4 25M6 20L10 25M12 20L16 25"/></g><g transform="translate(175 263) rotate(225)" fill="none" stroke="#f00" stroke-width="2.2"><circle cx="0" cy="0" r="7"/><path d="M-7.5 0L-12.5 13M7.5 0L12.5 13"/><rect x="-12.5" y="13" width="25" height="6.5"/><path d="M-4.5 13V19.5M3.5 13V19.5"/><path d="M-12 20L-8 25M-6 20L-2 25M0 20L4 25M6 20L10 25M12 20L16 25"/></g><g transform="translate(235 323) rotate(22.5)" fill="none" stroke="#f00" stroke-width="2.2"><circle cx="0" cy="0" r="7" fill="#FAFAFA"/><path d="M-4 8L-11 21M0 8V25M4 8L12 21"/></g><rect x="232" y="320" width="6" height="6" fill="#000"/><rect x="233" y="321" width="4" height="4" fill="#c8c8c8"/><g transform="translate(475 323) rotate(0)" fill="none" stroke="#f00" stroke-width="2.2"><circle cx="0" cy="0" r="7" fill="#FAFAFA"/><path d="M-4 8L-11 21M0 8V25M4 8L12 21"/></g><rect x="472" y="320" width="6" height="6" fill="#000"/><rect x="473" y="321" width="4" height="4" fill="#c8c8c8"/><g transform="translate(654 323) rotate(0)" fill="none" stroke="#f00" stroke-width="2.2"><circle cx="0" cy="0" r="7" fill="#FAFAFA"/><path d="M-4 8L-11 21M0 8V25M4 8L12 21"/></g><rect x="651" y="320" width="7" height="6" fill="#000"/><rect x="652" y="321" width="5" height="4" fill="#c8c8c8"/><g transform="translate(235 442) rotate(0)" fill="none" stroke="#f00" stroke-width="2.2"><path d="M-16 -8V0H16V-8M-15 4H16M-15.0 4L-9.0 10M-7.2 4L-1.2 10M0.6 4L6.6 10M8.4 4L14.4 10M16.2 4L22.2 10"/></g><g transform="translate(475 443) rotate(-7)" fill="none" stroke="#f00" stroke-width="2.2"><path d="M-15 0H16M-15.0 0L-21.0 6.5M-7.2 0L-13.2 6.5M0.6 0L-5.4 6.5M8.4 0L2.4 6.5M16.2 0L10.2 6.5"/></g><g transform="translate(654 442) rotate(0)" fill="none" stroke="#f00" stroke-width="2.2"><path d="M-6.6 -2.4A7 7 0 1 0 6.6 -2.4"/><path d="M-7.5 0L-12.5 13M7.5 0L12.5 13"/><rect x="-12.5" y="13" width="25" height="6.5"/><path d="M-4.5 13V19.5M3.5 13V19.5"/><path d="M-12 20L-8 25M-6 20L-2 25M0 20L4 25M6 20L10 25M12 20L16 25"/></g><g transform="translate(714 383.5) rotate(246)" fill="none" stroke="#f00" stroke-width="2.2"><path d="M-15 0H16M-15.0 0L-21.0 6.5M-7.2 0L-13.2 6.5M0.6 0L-5.4 6.5M8.4 0L2.4 6.5M16.2 0L10.2 6.5"/></g><g transform="translate(175 562) rotate(0)" fill="none" stroke="#f00" stroke-width="2.2"><circle cx="0" cy="0" r="7" fill="#FAFAFA"/><path d="M-4 8L-11 21M0 8V25M4 8L12 21"/></g><rect x="172" y="559" width="7" height="7" fill="#000"/><rect x="173" y="560" width="5" height="5" fill="#c8c8c8"/><g transform="translate(235 502) rotate(202)" fill="none" stroke="#f00" stroke-width="2.2"><path d="M4.95 -4.95A7 7 0 1 1 -4.95 -4.95"/><path d="M-4 8L-11 21M0 8V25M4 8L12 21"/></g><g transform="translate(355 502) rotate(90)" fill="none" stroke="#f00" stroke-width="2.2"><path d="M-16 -8V0H16V-8M-15 4H16M-15.0 4L-9.0 10M-7.2 4L-1.2 10M0.6 4L6.6 10M8.4 4L14.4 10M16.2 4L22.2 10"/></g><g transform="translate(475 502) rotate(225)" fill="none" stroke="#f00" stroke-width="2.2"><path d="M4.95 -4.95A7 7 0 1 1 -4.95 -4.95"/><path d="M-4 8L-11 21M0 8V25M4 8L12 21"/></g><g transform="translate(654 562) rotate(0)" fill="none" stroke="#f00" stroke-width="2.2"><path d="M-4 -17V17M4 -17V17M-9 -21.0L-4 -16.0M9 -21.0L4 -16.0M-9 -13.8L-4 -8.8M9 -13.8L4 -8.8M-9 -6.5L-4 -1.5M9 -6.5L4 -1.5M-9 0.8L-4 5.8M9 0.8L4 5.8M-9 8.0L-4 13.0M9 8.0L4 13.0"/></g><g transform="translate(175 622) rotate(90)" fill="none" stroke="#f00" stroke-width="2.2"><path d="M-16 -8V0H16V-8M-15 4H16M-15.0 4L-9.0 10M-7.2 4L-1.2 10M0.6 4L6.6 10M8.4 4L14.4 10M16.2 4L22.2 10"/></g><g transform="translate(295 622) rotate(-45)" fill="none" stroke="#f00" stroke-width="2.2"><path d="M-16 -8V0H16V-8M-15 4H16M-15.0 4L-9.0 10M-7.2 4L-1.2 10M0.6 4L6.6 10M8.4 4L14.4 10M16.2 4L22.2 10"/></g><g transform="translate(415 622) rotate(90)" fill="none" stroke="#f00" stroke-width="2.2"><circle cx="0" cy="0" r="7"/><path d="M-7.5 0L-12.5 13M7.5 0L12.5 13"/><rect x="-12.5" y="13" width="25" height="6.5"/><path d="M-4.5 13V19.5M3.5 13V19.5"/><path d="M-12 20L-8 25M-6 20L-2 25M0 20L4 25M6 20L10 25M12 20L16 25"/></g><g transform="translate(535 622) rotate(-45)" fill="none" stroke="#f00" stroke-width="2.2"><circle cx="0" cy="0" r="7"/><path d="M-7.5 0L-12.5 13M7.5 0L12.5 13"/><rect x="-12.5" y="13" width="25" height="6.5"/><path d="M-4.5 13V19.5M3.5 13V19.5"/><path d="M-12 20L-8 25M-6 20L-2 25M0 20L4 25M6 20L10 25M12 20L16 25"/></g><g transform="translate(714 622) rotate(-90)" fill="none" stroke="#f00" stroke-width="2.2"><path d="M-4 -17V17M4 -17V17M-9 -21.0L-4 -16.0M9 -21.0L4 -16.0M-9 -13.8L-4 -8.8M9 -13.8L4 -8.8M-9 -6.5L-4 -1.5M9 -6.5L4 -1.5M-9 0.8L-4 5.8M9 0.8L4 5.8M-9 8.0L-4 13.0M9 8.0L4 13.0"/></g><g transform="translate(654 682) rotate(-45)" fill="none" stroke="#f00" stroke-width="2.2"><path d="M-16 -8V0H16V-8M-15 4H16M-15.0 4L-9.0 10M-7.2 4L-1.2 10M0.6 4L6.6 10M8.4 4L14.4 10M16.2 4L22.2 10"/></g></svg><div class="a t" style="left:126px;top:671px;color:#f00;font-size:9.6px;line-height:11px;white-space:nowrap;letter-spacing:-0.1px">1000 mm</div></body></html>
